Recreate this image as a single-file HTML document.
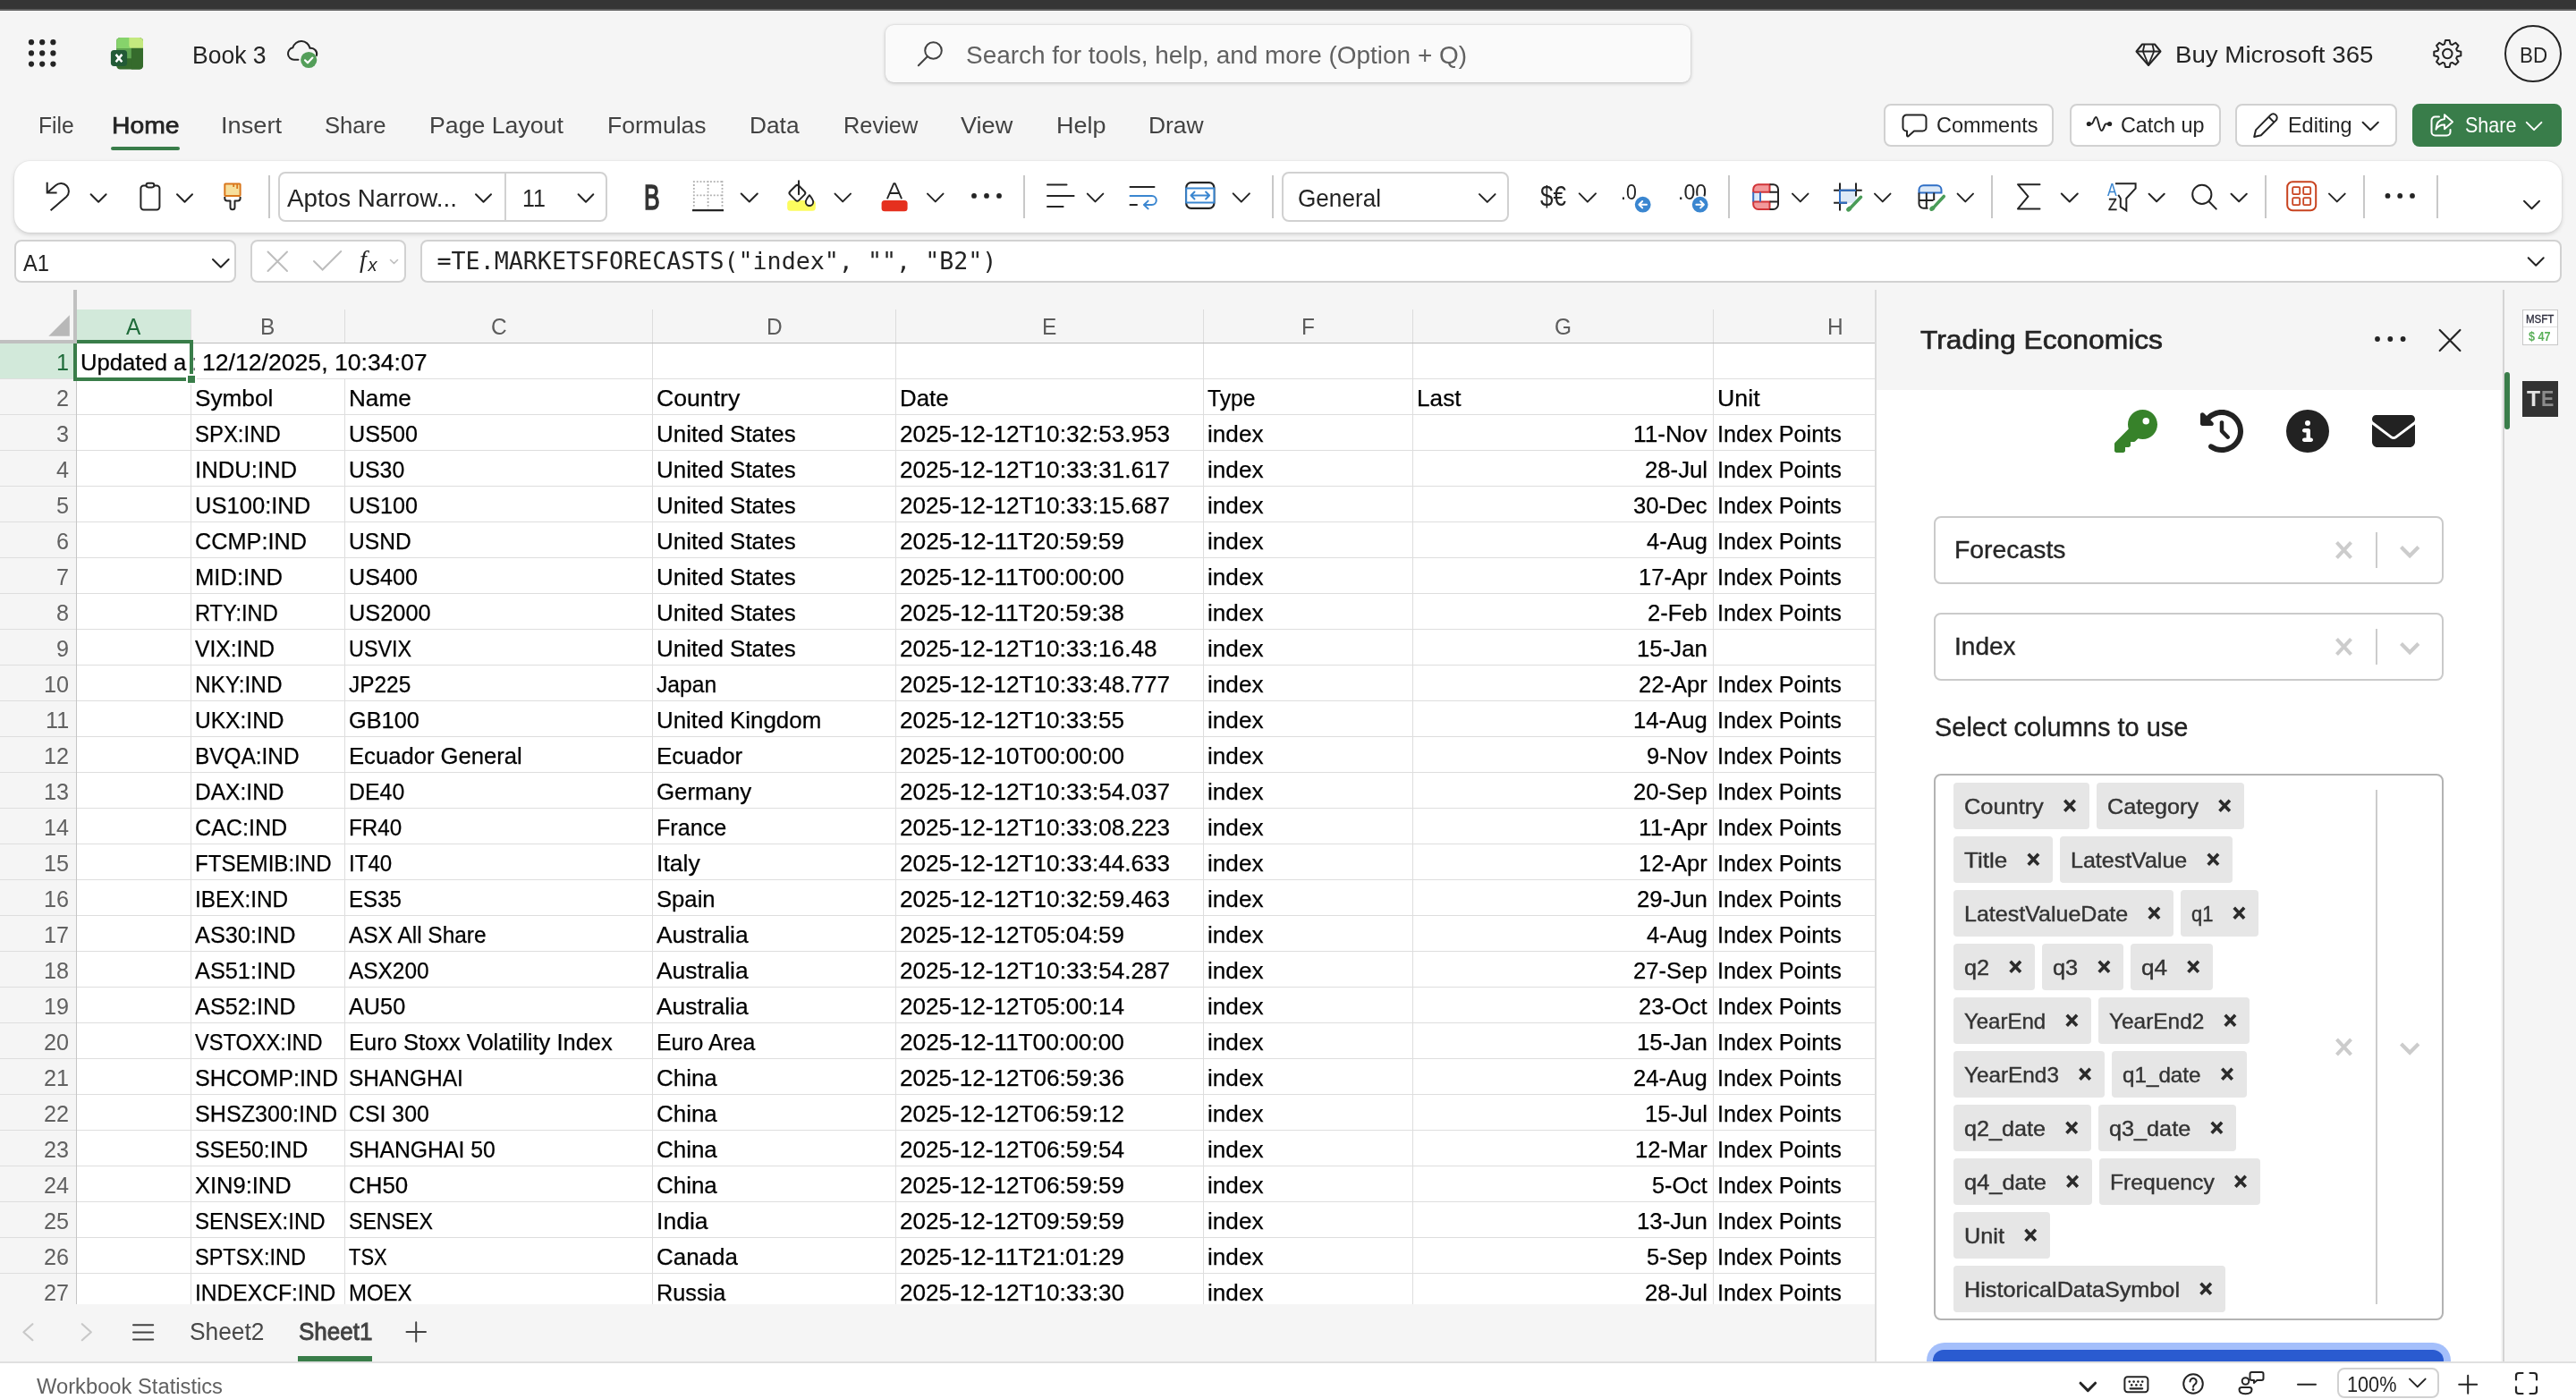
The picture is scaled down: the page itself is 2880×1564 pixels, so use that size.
<!DOCTYPE html>
<html lang="en"><head><meta charset="utf-8"><title>Book 3 - Excel</title>
<style>
html,body{margin:0;padding:0;}
body{width:2880px;height:1564px;overflow:hidden;position:relative;background:#f5f5f5;font-family:"Liberation Sans",sans-serif;color:#242424;}
.t{position:absolute;white-space:pre;}
.a{position:absolute;}
svg{position:absolute;overflow:visible;}
.box{position:absolute;box-sizing:border-box;border:2px solid #d1d1d1;border-radius:8px;background:#fff;}
.sep{position:absolute;width:2px;background:#c8c8c8;}
#root{position:absolute;left:0;top:0;width:2880px;height:1564px;will-change:transform;}

</style></head>
<body>
<div id="root">
<div id="top">
<div class="a" style="left:0;top:0;width:2880px;height:10px;background:#353535"></div><div class="a" style="left:0;top:10px;width:2880px;height:2px;background:#606060"></div><div class="a" style="left:0;top:12px;width:2880px;height:1px;background:#fff"></div>
<svg class="a" style="left:0;top:0" width="1" height="1" fill="#242424"><circle cx="35" cy="47.2" r="3.1"/><circle cx="35" cy="59.4" r="3.1"/><circle cx="35" cy="71.6" r="3.1"/><circle cx="47.2" cy="47.2" r="3.1"/><circle cx="47.2" cy="59.4" r="3.1"/><circle cx="47.2" cy="71.6" r="3.1"/><circle cx="59.4" cy="47.2" r="3.1"/><circle cx="59.4" cy="59.4" r="3.1"/><circle cx="59.4" cy="71.6" r="3.1"/></svg>
<svg class="a" style="left:0;top:0" width="1" height="1"><defs><clipPath id="xc"><rect x="130.200" y="41.900" width="29.800" height="35.700" rx="4.200"/></clipPath></defs><g clip-path="url(#xc)"><rect x="130" y="41" width="31" height="37" fill="#356b2c"/><rect x="130" y="41" width="17" height="13.500" fill="#86d36b"/><rect x="130" y="54.200" width="17" height="11.100" fill="#5fa552"/><rect x="146.800" y="52.700" width="14" height="26" fill="#356b2c"/><path d="M144.300 41h16.700v12.700h-13.700a3 3 0 0 1-3-3z" fill="#c4e97f"/></g><rect x="123.900" y="56" width="18.200" height="17.900" rx="3.600" fill="#225a36"/><path d="M129.600 60.900l6.800 8.400M136.400 60.900l-6.800 8.400" stroke="#fff" stroke-width="2.500" fill="none"/></svg>
<div class="t " style="left:215.00px;top:47.60px;font-size:28.00px;line-height:28.00px;color:#242424;transform:scaleX(0.9475);transform-origin:0 50%;">Book 3</div>
<svg class="a" style="left:0;top:0" width="1" height="1"><path d="M333.500 66.800H328.80A6.8 6.8 0 0 1 327.36 53.35A9.9 9.9 0 0 1 346.57 53.88A6.6 6.6 0 0 1 353.98 62.11" fill="none" stroke="#242424" stroke-width="2" stroke-linecap="round"/><circle cx="345.200" cy="67" r="9.100" fill="#539e59"/><path d="M341 67.300l3 3 5.400-5.700" fill="none" stroke="#fff" stroke-width="2.200" stroke-linecap="round" stroke-linejoin="round"/></svg>
<div class="a" style="left:990px;top:28px;width:900px;height:64px;border-radius:9px;background:#fafafa;box-shadow:0 1px 4px rgba(0,0,0,.22),0 0 2px rgba(0,0,0,.10)"></div>
<svg class="a" style="left:1024.0px;top:44.0px" width="32.0" height="32.0" viewBox="0 0 32 32"><circle cx="19.5" cy="12.5" r="9.3" fill="none" stroke="#424242" stroke-width="2"/><path d="M12.8 19.2L2.8 29.2" stroke="#424242" stroke-width="2" stroke-linecap="round"/></svg>
<div class="t " style="left:1080.40px;top:48.22px;font-size:27.50px;line-height:27.50px;color:#616161;transform:scaleX(1.0163);transform-origin:0 50%;">Search for tools, help, and more (Option + Q)</div>
<svg class="a" style="left:2387.0px;top:47.0px" width="30.0" height="28.0" viewBox="0 0 30 28"><path d="M8 2.5h14l6.5 8L15 26 1.5 10.5z" fill="none" stroke="#242424" stroke-width="2" stroke-linejoin="round"/><path d="M1.5 10.5h27M10.5 2.8L8.8 10.5 15 25.5l6.2-15-1.7-7.7" fill="none" stroke="#242424" stroke-width="1.8" stroke-linejoin="round"/></svg>
<div class="t " style="left:2431.60px;top:48.17px;font-size:26.50px;line-height:26.50px;color:#242424;transform:scaleX(1.0439);transform-origin:0 50%;">Buy Microsoft 365</div>
<svg class="a" style="left:2719.8px;top:44.0px" width="33.0" height="32.0" viewBox="0 0 33 32"><g transform="translate(16.3,16)" fill="none" stroke="#242424" stroke-width="2" stroke-linejoin="round"><polygon points="-3.31,-10.70 -2.27,-15.03 2.27,-15.03 3.31,-10.70 5.23,-9.91 9.02,-12.23 12.23,-9.02 9.91,-5.23 10.70,-3.31 15.03,-2.27 15.03,2.27 10.70,3.31 9.91,5.23 12.23,9.02 9.02,12.23 5.23,9.91 3.31,10.70 2.27,15.03 -2.27,15.03 -3.31,10.70 -5.23,9.91 -9.02,12.23 -12.23,9.02 -9.91,5.23 -10.70,3.31 -15.03,2.27 -15.03,-2.27 -10.70,-3.31 -9.91,-5.23 -12.23,-9.02 -9.02,-12.23 -5.23,-9.91"/><circle r="5.2"/></g></svg>
<div class="a" style="left:2800px;top:28px;width:64px;height:64px;border-radius:50%;box-sizing:border-box;border:2px solid #242424"></div>
<div class="t " style="left:2816.60px;top:49.86px;font-size:24.50px;line-height:24.50px;color:#242424;transform:scaleX(0.9138);transform-origin:0 50%;">BD</div>
<div class="t " style="left:43.30px;top:127.07px;font-size:26.50px;line-height:26.50px;color:#424242;transform:scaleX(0.9299);transform-origin:0 50%;">File</div>
<div class="t " style="left:124.90px;top:127.07px;font-size:26.50px;line-height:26.50px;color:#242424;transform:scaleX(1.0679);transform-origin:0 50%;-webkit-text-stroke:0.75px #242424;">Home</div>
<div class="t " style="left:247.30px;top:127.07px;font-size:26.50px;line-height:26.50px;color:#424242;transform:scaleX(1.0260);transform-origin:0 50%;">Insert</div>
<div class="t " style="left:362.80px;top:127.07px;font-size:26.50px;line-height:26.50px;color:#424242;transform:scaleX(0.9674);transform-origin:0 50%;">Share</div>
<div class="t " style="left:479.60px;top:127.07px;font-size:26.50px;line-height:26.50px;color:#424242;transform:scaleX(1.0066);transform-origin:0 50%;">Page Layout</div>
<div class="t " style="left:678.80px;top:127.07px;font-size:26.50px;line-height:26.50px;color:#424242;transform:scaleX(1.0013);transform-origin:0 50%;">Formulas</div>
<div class="t " style="left:838.20px;top:127.07px;font-size:26.50px;line-height:26.50px;color:#424242;transform:scaleX(0.9912);transform-origin:0 50%;">Data</div>
<div class="t " style="left:943.10px;top:127.07px;font-size:26.50px;line-height:26.50px;color:#424242;transform:scaleX(0.9578);transform-origin:0 50%;">Review</div>
<div class="t " style="left:1074.40px;top:127.07px;font-size:26.50px;line-height:26.50px;color:#424242;transform:scaleX(1.0223);transform-origin:0 50%;">View</div>
<div class="t " style="left:1180.70px;top:127.07px;font-size:26.50px;line-height:26.50px;color:#424242;transform:scaleX(1.0163);transform-origin:0 50%;">Help</div>
<div class="t " style="left:1284.40px;top:127.07px;font-size:26.50px;line-height:26.50px;color:#424242;transform:scaleX(0.9967);transform-origin:0 50%;">Draw</div>
<div class="a" style="left:124px;top:164.3px;width:76.7px;height:3.8px;border-radius:2px;background:#397d4a"></div>
<div class="a" style="left:2106.4px;top:116px;width:190.1px;height:48px;box-sizing:border-box;border:2px solid #d1d1d1;border-radius:8px;background:#fff"></div>
<svg class="a" style="left:2126.0px;top:127.0px" width="29.0" height="27.0" viewBox="0 0 29 27"><path d="M5.5 1.5h18a4 4 0 0 1 4 4v10a4 4 0 0 1-4 4H14l-6.2 5.6c-.7.6-1.8.1-1.8-.8v-4.8h-.5a4 4 0 0 1-4-4v-10a4 4 0 0 1 4-4z" fill="none" stroke="#242424" stroke-width="2" stroke-linejoin="round"/></svg>
<div class="t " style="left:2164.50px;top:128.48px;font-size:24.00px;line-height:24.00px;color:#242424;transform:scaleX(0.9782);transform-origin:0 50%;">Comments</div>
<div class="a" style="left:2313.5px;top:116px;width:169.3px;height:48px;box-sizing:border-box;border:2px solid #d1d1d1;border-radius:8px;background:#fff"></div>
<svg class="a" style="left:2332.0px;top:128.0px" width="30.0" height="22.0" viewBox="0 0 30 22"><path d="M3.5 10.5h3c2 0 2.6-7.5 5-7.5s3.2 15 6 15 2.8-7.5 5-7.5h3" fill="none" stroke="#242424" stroke-width="2" stroke-linecap="round"/><circle cx="3.4" cy="10.5" r="2.6" fill="#242424"/><circle cx="26.6" cy="10.5" r="2.6" fill="#242424"/></svg>
<div class="t " style="left:2371.00px;top:128.48px;font-size:24.00px;line-height:24.00px;color:#242424;transform:scaleX(0.9734);transform-origin:0 50%;">Catch up</div>
<div class="a" style="left:2499.0px;top:116px;width:181.0px;height:48px;box-sizing:border-box;border:2px solid #d1d1d1;border-radius:8px;background:#fff"></div>
<svg class="a" style="left:2518.0px;top:125.0px" width="30.0" height="30.0" viewBox="0 0 30 30"><path d="M20.5 3.6a4.2 4.2 0 0 1 6 6L9.8 26.2 2.2 28l1.8-7.6z" fill="none" stroke="#242424" stroke-width="2" stroke-linejoin="round"/><path d="M18.5 5.8l6 6" stroke="#242424" stroke-width="2"/></svg>
<div class="t " style="left:2558.00px;top:128.48px;font-size:24.00px;line-height:24.00px;color:#242424;transform:scaleX(0.9757);transform-origin:0 50%;">Editing</div>
<svg class="a" style="left:0;top:0" width="1" height="1"><path d="M2641.6 136.7L2650.2 145.3L2658.8 136.7" fill="none" stroke="#242424" stroke-width="2.0" stroke-linecap="round" stroke-linejoin="round"/></svg>
<div class="a" style="left:2697.0px;top:116px;width:167.0px;height:48px;box-sizing:border-box;border:2px solid #397d4a;border-radius:8px;background:#397d4a"></div>
<svg class="a" style="left:2716.0px;top:126.0px" width="28.0" height="28.0" viewBox="0 0 28 28"><path d="M11 4.5H6.5a4 4 0 0 0-4 4v13a4 4 0 0 0 4 4h13a4 4 0 0 0 4-4V19" fill="none" stroke="#fff" stroke-width="2" stroke-linecap="round"/><path d="M17 2.2l9 8-9 8v-4.6c-5-.2-7.5 1.6-9.5 5 .3-6.5 3.5-11 9.5-11.6z" fill="none" stroke="#fff" stroke-width="2" stroke-linejoin="round"/></svg>
<div class="t " style="left:2755.50px;top:128.48px;font-size:24.00px;line-height:24.00px;color:#fff;transform:scaleX(0.8978);transform-origin:0 50%;">Share</div>
<svg class="a" style="left:0;top:0" width="1" height="1"><path d="M2824.8 136.9L2833.1 145.1L2841.4 136.9" fill="none" stroke="#fff" stroke-width="2.0" stroke-linecap="round" stroke-linejoin="round"/></svg>
<div class="a" style="left:16px;top:180px;width:2848px;height:80px;border-radius:18px;background:#fff;box-shadow:0 2px 5px rgba(0,0,0,.16),0 0 2px rgba(0,0,0,.10)"></div>
<svg class="a" style="left:0;top:0" width="1" height="1" fill="none" stroke="#242424" stroke-width="2" stroke-linejoin="miter"><path d="M52.700 203.800V215.500H63.600M52.700 215.500L62.250 207.350A8.700 8.700 0 1 1 74.200 220L56.600 235.300"/></svg>
<svg class="a" style="left:0;top:0" width="1" height="1"><path d="M101.6 217.2L110.1 225.8L118.6 217.2" fill="none" stroke="#242424" stroke-width="2.0" stroke-linecap="round" stroke-linejoin="round"/></svg>
<svg class="a" style="left:0;top:0" width="1" height="1" fill="none" stroke="#242424" stroke-width="2"><rect x="157.400" y="207.400" width="21" height="27" rx="3.200"/><rect x="163.500" y="204.800" width="8.800" height="4.600" rx="2.300" fill="#fff"/></svg>
<svg class="a" style="left:0;top:0" width="1" height="1"><path d="M198.0 217.2L206.5 225.8L215.0 217.2" fill="none" stroke="#242424" stroke-width="2.0" stroke-linecap="round" stroke-linejoin="round"/></svg>
<svg class="a" style="left:0;top:0" width="1" height="1"><rect x="251.300" y="205.500" width="17.300" height="13.500" rx="0.800" fill="#f6df9c" stroke="#d9771c" stroke-width="2"/><path d="M261.200 205.500v3.600M265.200 205.500v5.600" stroke="#d9771c" stroke-width="1.800" fill="none"/><path d="M251.300 220v1.800a2.600 2.600 0 0 0 2.600 2.600h3.600v7.400a2.500 2.500 0 0 0 5 0v-7.400h3.500a2.600 2.600 0 0 0 2.600-2.600V220" fill="none" stroke="#242424" stroke-width="2" stroke-linejoin="round"/></svg>
<div class="sep" style="left:299.8px;top:196px;height:48px"></div>
<div class="box" style="left:310.5px;top:192px;width:368.5px;height:56px"></div>
<div class="a" style="left:563.6px;top:193px;width:2px;height:54px;background:#d1d1d1"></div>
<div class="t " style="left:320.80px;top:207.80px;font-size:28.00px;line-height:28.00px;color:#242424;transform:scaleX(0.9926);transform-origin:0 50%;">Aptos Narrow...</div>
<svg class="a" style="left:0;top:0" width="1" height="1"><path d="M532.0 217.2L540.5 225.8L549.0 217.2" fill="none" stroke="#242424" stroke-width="2.0" stroke-linecap="round" stroke-linejoin="round"/></svg>
<div class="t " style="left:584.00px;top:207.80px;font-size:28.00px;line-height:28.00px;color:#242424;transform:scaleX(0.8945);transform-origin:0 50%;">11</div>
<svg class="a" style="left:0;top:0" width="1" height="1"><path d="M646.6 217.3L655.0 225.7L663.3 217.3" fill="none" stroke="#242424" stroke-width="2.0" stroke-linecap="round" stroke-linejoin="round"/></svg>
<div class="t " style="left:720.20px;top:201.53px;font-size:38.00px;line-height:38.00px;color:#333;transform:scaleX(0.6944);transform-origin:0 50%;-webkit-text-stroke:1.7px #333;">B</div>
<svg class="a" style="left:773.5px;top:201.8px" width="35.0" height="35.0" viewBox="0 0 35 35"><g stroke="#adadad" stroke-width="1.8" stroke-dasharray="1.8 2" fill="none"><path d="M1 1.200h33.500M1.800 0.300v31M33.500 0.300v31M17.600 0.300v31M1 16.400h33.500"/></g><path d="M0 33.2h35" stroke="#242424" stroke-width="2.2"/></svg>
<svg class="a" style="left:0;top:0" width="1" height="1"><path d="M828.7 216.5L837.8 225.5L846.8 216.5" fill="none" stroke="#242424" stroke-width="2.0" stroke-linecap="round" stroke-linejoin="round"/></svg>
<svg class="a" style="left:0;top:0" width="1" height="1"><rect x="880.200" y="223.900" width="31.600" height="11.800" rx="3.500" fill="#fcfc5e"/><rect x="-7" y="-7" width="14" height="14" rx="2.600" transform="translate(891.400 215.800) rotate(45)" fill="#fff" stroke="#242424" stroke-width="2"/><path d="M893 202.300v15" stroke="#242424" stroke-width="2" stroke-linecap="round" fill="none"/><path d="M905 218.200c2.400 3 4.200 5.400 4.200 7.600a4.200 4.200 0 0 1-8.400 0c0-2.200 1.800-4.600 4.200-7.600z" fill="#fff" stroke="#242424" stroke-width="1.900" stroke-linejoin="round"/></svg>
<svg class="a" style="left:0;top:0" width="1" height="1"><path d="M933.5 216.6L942.2 225.4L951.0 216.6" fill="none" stroke="#242424" stroke-width="2.0" stroke-linecap="round" stroke-linejoin="round"/></svg>
<svg class="a" style="left:985.0px;top:203.0px" width="31.0" height="34.0" viewBox="0 0 31 34"><rect x="0.6" y="21" width="29" height="12.2" rx="3.5" fill="#e5301f"/><path d="M7.2 18.6L14.3 2.2h1.4L22.800 18.6M9.600 13h10.800" fill="none" stroke="#242424" stroke-width="1.9" stroke-linejoin="round" stroke-linecap="round"/></svg>
<svg class="a" style="left:0;top:0" width="1" height="1"><path d="M1037.0 216.6L1045.8 225.4L1054.5 216.6" fill="none" stroke="#242424" stroke-width="2.0" stroke-linecap="round" stroke-linejoin="round"/></svg>
<svg class="a" style="left:0;top:0" width="1" height="1" fill="#242424"><circle cx="1089" cy="218.900" r="2.900"/><circle cx="1103" cy="218.900" r="2.900"/><circle cx="1117" cy="218.900" r="2.900"/></svg>
<div class="sep" style="left:1144px;top:196px;height:48px"></div>
<svg class="a" style="left:0;top:0" width="1" height="1" stroke="#242424" stroke-width="2" stroke-linecap="round"><path d="M1171 206.600H1192.500M1171 218.900H1200.600M1171 231H1188.600"/></svg>
<svg class="a" style="left:0;top:0" width="1" height="1"><path d="M1215.8 216.6L1224.5 225.4L1233.3 216.6" fill="none" stroke="#242424" stroke-width="2.0" stroke-linecap="round" stroke-linejoin="round"/></svg>
<svg class="a" style="left:0;top:0" width="1" height="1" fill="none" stroke-width="2" stroke-linecap="round" stroke-linejoin="round"><path d="M1263.500 209.100h27M1263.500 229h7.500" stroke="#242424"/><path d="M1263.500 219h24.300a5 5 0 0 1 0 10h-8.500M1283.600 224.600l-4.600 4.400 4.600 4.400" stroke="#3a86d0"/></svg>
<svg class="a" style="left:1325.0px;top:203.4px" width="34.0" height="31.0" viewBox="0 0 34 31"><rect x="1.200" y="1.200" width="31.200" height="28.600" rx="5.500" fill="none" stroke="#242424" stroke-width="2.200"/><rect x="1.200" y="7.500" width="31.200" height="16" fill="#fff" stroke="#3a86d0" stroke-width="2"/><path d="M6.500 15.500h20.600M10.500 11.500l-4 4 4 4M23.100 11.500l4 4-4 4" fill="none" stroke="#3a86d0" stroke-width="2" stroke-linecap="round" stroke-linejoin="round"/></svg>
<svg class="a" style="left:0;top:0" width="1" height="1"><path d="M1378.7 216.4L1387.8 225.6L1396.9 216.4" fill="none" stroke="#242424" stroke-width="2.0" stroke-linecap="round" stroke-linejoin="round"/></svg>
<div class="sep" style="left:1422px;top:196px;height:48px"></div>
<div class="box" style="left:1432.8px;top:192px;width:254.6px;height:56px"></div>
<div class="t " style="left:1451.00px;top:208.10px;font-size:28.00px;line-height:28.00px;color:#242424;transform:scaleX(0.9336);transform-origin:0 50%;">General</div>
<svg class="a" style="left:0;top:0" width="1" height="1"><path d="M1654.0 217.1L1662.8 225.9L1671.6 217.1" fill="none" stroke="#242424" stroke-width="2.0" stroke-linecap="round" stroke-linejoin="round"/></svg>
<div class="t " style="left:1722.00px;top:203.98px;font-size:30.50px;line-height:30.50px;color:#242424;transform:scaleX(0.8551);transform-origin:0 50%;">$€</div>
<svg class="a" style="left:0;top:0" width="1" height="1"><path d="M1765.8 216.4L1774.9 225.6L1784.0 216.4" fill="none" stroke="#242424" stroke-width="2.0" stroke-linecap="round" stroke-linejoin="round"/></svg>
<div class="t " style="left:1812.00px;top:203.54px;font-size:23.70px;line-height:23.70px;color:#242424;transform:scaleX(0.9005);transform-origin:0 50%;">.0</div>
<svg class="a" style="left:1826.4px;top:218.4px" width="21.4" height="21.4" viewBox="0 0 21.4 21.4"><circle cx="10.700" cy="10.700" r="10.500" fill="#fff"/><circle cx="10.700" cy="10.700" r="8.900" fill="#3a86d0"/><path d="M15 10.700H6.800M10.200 7L6.500 10.700l3.700 3.700" fill="none" stroke="#fff" stroke-width="2" stroke-linecap="round" stroke-linejoin="round"/></svg>
<div class="t " style="left:1876.00px;top:203.54px;font-size:23.70px;line-height:23.70px;color:#242424;transform:scaleX(0.9714);transform-origin:0 50%;">.00</div>
<svg class="a" style="left:1890.3px;top:218.4px" width="21.4" height="21.4" viewBox="0 0 21.4 21.4"><circle cx="10.700" cy="10.700" r="10.500" fill="#fff"/><circle cx="10.700" cy="10.700" r="8.900" fill="#3a86d0"/><path d="M6.400 10.700h8.200M11.200 7l3.700 3.700-3.700 3.700" fill="none" stroke="#fff" stroke-width="2" stroke-linecap="round" stroke-linejoin="round"/></svg>
<div class="sep" style="left:1931.800px;top:196px;height:48px"></div>
<svg class="a" style="left:1958.5px;top:204.5px" width="31.0" height="31.0" viewBox="0 0 31 31"><defs><clipPath id="cf"><rect x="1.200" y="1.200" width="27.800" height="27.800" rx="5.500"/></clipPath></defs><g clip-path="url(#cf)"><rect x="0" y="0" width="30" height="30" fill="#fff"/><rect x="0" y="0" width="19.500" height="9.800" fill="#f2999b"/><rect x="0" y="20.400" width="19.500" height="9.800" fill="#f2999b"/><rect x="0" y="9.800" width="8.500" height="10.600" fill="#dbe9f8"/></g><path d="M19.500 1.200H6.700a5.500 5.500 0 0 0-5.500 5.500v3.100h18.300zM19.500 29H6.700a5.500 5.500 0 0 1-5.500-5.500v-3.100h18.300z" fill="none" stroke="#d13438" stroke-width="2"/><path d="M1.200 9.800v10.600M9 9.800v10.600" stroke="#3a6fc4" stroke-width="2"/><path d="M19.500 1.200h4a5.500 5.500 0 0 1 5.500 5.500v16.800a5.500 5.500 0 0 1-5.500 5.500h-4M19.500 9.800h9.500M19.500 20.400h9.500" fill="none" stroke="#242424" stroke-width="2"/></svg>
<svg class="a" style="left:0;top:0" width="1" height="1"><path d="M2004.0 216.6L2012.8 225.4L2021.5 216.6" fill="none" stroke="#242424" stroke-width="2.0" stroke-linecap="round" stroke-linejoin="round"/></svg>
<svg class="a" style="left:0;top:0" width="1" height="1" fill="none" stroke-width="2"><rect x="2057" y="212.700" width="18" height="14.100" fill="#dce9f7" stroke="none"/><path d="M2057 204.600v30.800M2075 204.600v15M2050.100 212.700h31.600M2050.100 226.800h15" stroke="#242424"/><path d="M2075 212.700h-18v14.100h8" stroke="#2f6fc6"/><path d="M2080.500 220.300L2070 231.300" stroke="#4a9c58" stroke-width="3.600" stroke-linecap="round"/><ellipse cx="2067.300" cy="233.600" rx="3.400" ry="2.500" transform="rotate(-40 2067.300 233.600)" fill="#4a9c58" stroke="none"/></svg>
<svg class="a" style="left:0;top:0" width="1" height="1"><path d="M2096.0 216.6L2104.8 225.4L2113.5 216.6" fill="none" stroke="#242424" stroke-width="2.0" stroke-linecap="round" stroke-linejoin="round"/></svg>
<svg class="a" style="left:0;top:0" width="1" height="1" fill="none" stroke-width="2"><path d="M2145.500 215.400v-3.100a5 5 0 0 1 5-5h15a5 5 0 0 1 5 5v3.100z" fill="#dce9f7" stroke="#2f6fc6"/><path d="M2145.500 215.400v12.300a5 5 0 0 0 5 5h5M2145.500 224h16M2153.800 215.400v17.300M2162.200 215.400v8.600" stroke="#242424"/><path d="M2173.300 219.500L2163 230.600" stroke="#4a9c58" stroke-width="3.600" stroke-linecap="round"/><ellipse cx="2160.400" cy="233" rx="3.400" ry="2.500" transform="rotate(-40 2160.400 233)" fill="#4a9c58" stroke="none"/></svg>
<svg class="a" style="left:0;top:0" width="1" height="1"><path d="M2188.6 216.6L2197.3 225.4L2206.0 216.6" fill="none" stroke="#242424" stroke-width="2.0" stroke-linecap="round" stroke-linejoin="round"/></svg>
<div class="sep" style="left:2226px;top:196px;height:48px"></div>
<svg class="a" style="left:2253.5px;top:205.0px" width="29.0" height="30.0" viewBox="0 0 29 30"><path d="M26.500 1.200H2l11.500 13.500L2 28.400h24.500" fill="none" stroke="#242424" stroke-width="2" stroke-linejoin="round" stroke-linecap="round"/></svg>
<svg class="a" style="left:0;top:0" width="1" height="1"><path d="M2304.8 216.5L2313.8 225.5L2322.8 216.5" fill="none" stroke="#242424" stroke-width="2.0" stroke-linecap="round" stroke-linejoin="round"/></svg>
<svg class="a" style="left:0;top:0" width="1" height="1" fill="none" stroke="#242424" stroke-width="2" stroke-linejoin="miter"><path d="M2365 205.200h22.600v5.500L2377.300 221.700v13.700l-6.500-4.300v-9.400l-2.600-3.800"/></svg>
<div class="t " style="left:2355.80px;top:201.93px;font-size:20.40px;line-height:20.40px;color:#3a86d0;transform:scaleX(0.7864);transform-origin:0 50%;">A</div>
<div class="t " style="left:2356.70px;top:220.59px;font-size:17.50px;line-height:17.50px;color:#242424;transform:scaleX(0.9259);transform-origin:0 50%;-webkit-text-stroke:0.4px #242424;">Z</div>
<svg class="a" style="left:0;top:0" width="1" height="1"><path d="M2402.6 216.7L2411.1 225.3L2419.7 216.7" fill="none" stroke="#242424" stroke-width="2.0" stroke-linecap="round" stroke-linejoin="round"/></svg>
<svg class="a" style="left:2448.5px;top:205.0px" width="31.0" height="31.0" viewBox="0 0 31 31"><circle cx="12.800" cy="12.400" r="10.600" fill="none" stroke="#242424" stroke-width="2"/><path d="M20.400 20l8.400 8.600" stroke="#242424" stroke-width="2" stroke-linecap="round"/></svg>
<svg class="a" style="left:0;top:0" width="1" height="1"><path d="M2494.5 216.7L2503.2 225.3L2511.8 216.7" fill="none" stroke="#242424" stroke-width="2.0" stroke-linecap="round" stroke-linejoin="round"/></svg>
<div class="sep" style="left:2532px;top:196px;height:48px"></div>
<svg class="a" style="left:2555.5px;top:201.5px" width="35.0" height="35.0" viewBox="0 0 35 35"><rect x="1.200" y="1.200" width="32" height="32" rx="6" fill="none" stroke="#c8431f" stroke-width="2"/><g fill="none" stroke="#c8431f" stroke-width="1.800"><rect x="7.200" y="7.200" width="8" height="8" rx="1.200"/><rect x="19.200" y="7.200" width="8" height="8" rx="1.200"/><rect x="7.200" y="19.200" width="8" height="8" rx="1.200"/><rect x="19.200" y="19.200" width="8" height="8" rx="1.200"/></g></svg>
<svg class="a" style="left:0;top:0" width="1" height="1"><path d="M2604.0 216.6L2612.8 225.4L2621.7 216.6" fill="none" stroke="#242424" stroke-width="2.0" stroke-linecap="round" stroke-linejoin="round"/></svg>
<div class="sep" style="left:2642px;top:196px;height:48px"></div>
<svg class="a" style="left:0;top:0" width="1" height="1" fill="#242424"><circle cx="2669.500" cy="218.900" r="2.900"/><circle cx="2683.200" cy="218.900" r="2.900"/><circle cx="2697" cy="218.900" r="2.900"/></svg>
<div class="sep" style="left:2724px;top:196px;height:48px"></div>
<svg class="a" style="left:0;top:0" width="1" height="1"><path d="M2822.0 224.8L2830.5 233.2L2839.0 224.8" fill="none" stroke="#242424" stroke-width="2.0" stroke-linecap="round" stroke-linejoin="round"/></svg>
<div class="box" style="left:16px;top:268px;width:248px;height:48px"></div>
<div class="t " style="left:26.20px;top:281.71px;font-size:25.50px;line-height:25.50px;color:#242424;transform:scaleX(0.9299);transform-origin:0 50%;">A1</div>
<svg class="a" style="left:0;top:0" width="1" height="1"><path d="M238.0 290.0L246.8 298.8L255.6 290.0" fill="none" stroke="#242424" stroke-width="2.0" stroke-linecap="round" stroke-linejoin="round"/></svg>
<div class="box" style="left:280px;top:268px;width:174px;height:48px"></div>
<svg class="a" style="left:0;top:0" width="1" height="1" fill="none" stroke="#bdbdbd" stroke-width="2" stroke-linecap="round"><path d="M299.500 281.500l21.500 21.500M321 281.500l-21.500 21.500M351 292l9.600 9.500 20.600-20.500"/></svg>
<div class="t" style="left:402px;top:276px;font-size:28px;line-height:28px;font-family:'Liberation Serif',serif;font-style:italic;color:#242424">f</div>
<div class="t" style="left:411.5px;top:286px;font-size:20px;line-height:20px;font-style:italic;color:#242424">x</div>
<svg class="a" style="left:0;top:0" width="1" height="1"><path d="M436.5 290.5L440.5 294.5L444.5 290.5" fill="none" stroke="#bdbdbd" stroke-width="1.6" stroke-linecap="round" stroke-linejoin="round"/></svg>
<div class="box" style="left:470px;top:268px;width:2394px;height:48px"></div>
<div class="t" style="left:488.5px;top:276.70px;font-size:26.67px;line-height:30px;font-family:'DejaVu Sans Mono','Liberation Mono',monospace;letter-spacing:0px;color:#242424">=TE.MARKETSFORECASTS(&quot;index&quot;, &quot;&quot;, &quot;B2&quot;)</div>
<svg class="a" style="left:0;top:0" width="1" height="1"><path d="M2826.7 288.2L2835.2 296.8L2843.7 288.2" fill="none" stroke="#242424" stroke-width="2.0" stroke-linecap="round" stroke-linejoin="round"/></svg>
</div>
<div id="grid" class="a" style="left:0;top:324px;width:2096px;height:1134px;overflow:hidden">
<div class="a" style="left:86px;top:60px;width:2010px;height:1074px;background:#fff"></div>
<div class="a" style="left:86px;top:22px;width:128px;height:34px;background:#d2e9da"></div>
<div class="a" style="left:0;top:60px;width:82px;height:39px;background:#d2e9da"></div>
<div class="t " style="left:141.35px;top:27.79px;font-size:26.00px;line-height:26.00px;color:#1f6b3a;transform:scaleX(0.9400);transform-origin:0 50%;">A</div>
<div class="t " style="left:291.35px;top:27.79px;font-size:26.00px;line-height:26.00px;color:#5c5c5c;transform:scaleX(0.9400);transform-origin:0 50%;">B</div>
<div class="t " style="left:548.68px;top:27.79px;font-size:26.00px;line-height:26.00px;color:#5c5c5c;transform:scaleX(0.9400);transform-origin:0 50%;">C</div>
<div class="t " style="left:856.68px;top:27.79px;font-size:26.00px;line-height:26.00px;color:#5c5c5c;transform:scaleX(0.9400);transform-origin:0 50%;">D</div>
<div class="t " style="left:1165.35px;top:27.79px;font-size:26.00px;line-height:26.00px;color:#5c5c5c;transform:scaleX(0.9400);transform-origin:0 50%;">E</div>
<div class="t " style="left:1455.04px;top:27.79px;font-size:26.00px;line-height:26.00px;color:#5c5c5c;transform:scaleX(0.9400);transform-origin:0 50%;">F</div>
<div class="t " style="left:1737.99px;top:27.79px;font-size:26.00px;line-height:26.00px;color:#5c5c5c;transform:scaleX(0.9400);transform-origin:0 50%;">G</div>
<div class="t " style="left:2043.18px;top:27.79px;font-size:26.00px;line-height:26.00px;color:#5c5c5c;transform:scaleX(0.9400);transform-origin:0 50%;">H</div>
<div class="a" style="left:213px;top:22px;width:1px;height:37px;background:#dcdcdc"></div>
<div class="a" style="left:385px;top:22px;width:1px;height:37px;background:#dcdcdc"></div>
<div class="a" style="left:729px;top:22px;width:1px;height:37px;background:#dcdcdc"></div>
<div class="a" style="left:1001px;top:22px;width:1px;height:37px;background:#dcdcdc"></div>
<div class="a" style="left:1345px;top:22px;width:1px;height:37px;background:#dcdcdc"></div>
<div class="a" style="left:1579px;top:22px;width:1px;height:37px;background:#dcdcdc"></div>
<div class="a" style="left:1915px;top:22px;width:1px;height:37px;background:#dcdcdc"></div>
<div class="a" style="left:86px;top:59px;width:2010px;height:1px;background:#bdbdbd"></div>
<div class="a" style="left:0;top:99px;width:2096px;height:1px;background:#dedede"></div>
<div class="a" style="left:0;top:139px;width:2096px;height:1px;background:#dedede"></div>
<div class="a" style="left:0;top:179px;width:2096px;height:1px;background:#dedede"></div>
<div class="a" style="left:0;top:219px;width:2096px;height:1px;background:#dedede"></div>
<div class="a" style="left:0;top:259px;width:2096px;height:1px;background:#dedede"></div>
<div class="a" style="left:0;top:299px;width:2096px;height:1px;background:#dedede"></div>
<div class="a" style="left:0;top:339px;width:2096px;height:1px;background:#dedede"></div>
<div class="a" style="left:0;top:379px;width:2096px;height:1px;background:#dedede"></div>
<div class="a" style="left:0;top:419px;width:2096px;height:1px;background:#dedede"></div>
<div class="a" style="left:0;top:459px;width:2096px;height:1px;background:#dedede"></div>
<div class="a" style="left:0;top:499px;width:2096px;height:1px;background:#dedede"></div>
<div class="a" style="left:0;top:539px;width:2096px;height:1px;background:#dedede"></div>
<div class="a" style="left:0;top:579px;width:2096px;height:1px;background:#dedede"></div>
<div class="a" style="left:0;top:619px;width:2096px;height:1px;background:#dedede"></div>
<div class="a" style="left:0;top:659px;width:2096px;height:1px;background:#dedede"></div>
<div class="a" style="left:0;top:699px;width:2096px;height:1px;background:#dedede"></div>
<div class="a" style="left:0;top:739px;width:2096px;height:1px;background:#dedede"></div>
<div class="a" style="left:0;top:779px;width:2096px;height:1px;background:#dedede"></div>
<div class="a" style="left:0;top:819px;width:2096px;height:1px;background:#dedede"></div>
<div class="a" style="left:0;top:859px;width:2096px;height:1px;background:#dedede"></div>
<div class="a" style="left:0;top:899px;width:2096px;height:1px;background:#dedede"></div>
<div class="a" style="left:0;top:939px;width:2096px;height:1px;background:#dedede"></div>
<div class="a" style="left:0;top:979px;width:2096px;height:1px;background:#dedede"></div>
<div class="a" style="left:0;top:1019px;width:2096px;height:1px;background:#dedede"></div>
<div class="a" style="left:0;top:1059px;width:2096px;height:1px;background:#dedede"></div>
<div class="a" style="left:0;top:1099px;width:2096px;height:1px;background:#dedede"></div>
<div class="a" style="left:0;top:1139px;width:2096px;height:1px;background:#dedede"></div>
<div class="a" style="left:729px;top:60px;width:1px;height:39px;background:#dedede"></div>
<div class="a" style="left:1001px;top:60px;width:1px;height:39px;background:#dedede"></div>
<div class="a" style="left:1345px;top:60px;width:1px;height:39px;background:#dedede"></div>
<div class="a" style="left:1579px;top:60px;width:1px;height:39px;background:#dedede"></div>
<div class="a" style="left:1915px;top:60px;width:1px;height:39px;background:#dedede"></div>
<div class="a" style="left:213px;top:100px;width:1px;height:39px;background:#dedede"></div>
<div class="a" style="left:385px;top:100px;width:1px;height:39px;background:#dedede"></div>
<div class="a" style="left:729px;top:100px;width:1px;height:39px;background:#dedede"></div>
<div class="a" style="left:1001px;top:100px;width:1px;height:39px;background:#dedede"></div>
<div class="a" style="left:1345px;top:100px;width:1px;height:39px;background:#dedede"></div>
<div class="a" style="left:1579px;top:100px;width:1px;height:39px;background:#dedede"></div>
<div class="a" style="left:1915px;top:100px;width:1px;height:39px;background:#dedede"></div>
<div class="a" style="left:213px;top:140px;width:1px;height:39px;background:#dedede"></div>
<div class="a" style="left:385px;top:140px;width:1px;height:39px;background:#dedede"></div>
<div class="a" style="left:729px;top:140px;width:1px;height:39px;background:#dedede"></div>
<div class="a" style="left:1001px;top:140px;width:1px;height:39px;background:#dedede"></div>
<div class="a" style="left:1345px;top:140px;width:1px;height:39px;background:#dedede"></div>
<div class="a" style="left:1579px;top:140px;width:1px;height:39px;background:#dedede"></div>
<div class="a" style="left:1915px;top:140px;width:1px;height:39px;background:#dedede"></div>
<div class="a" style="left:213px;top:180px;width:1px;height:39px;background:#dedede"></div>
<div class="a" style="left:385px;top:180px;width:1px;height:39px;background:#dedede"></div>
<div class="a" style="left:729px;top:180px;width:1px;height:39px;background:#dedede"></div>
<div class="a" style="left:1001px;top:180px;width:1px;height:39px;background:#dedede"></div>
<div class="a" style="left:1345px;top:180px;width:1px;height:39px;background:#dedede"></div>
<div class="a" style="left:1579px;top:180px;width:1px;height:39px;background:#dedede"></div>
<div class="a" style="left:1915px;top:180px;width:1px;height:39px;background:#dedede"></div>
<div class="a" style="left:213px;top:220px;width:1px;height:39px;background:#dedede"></div>
<div class="a" style="left:385px;top:220px;width:1px;height:39px;background:#dedede"></div>
<div class="a" style="left:729px;top:220px;width:1px;height:39px;background:#dedede"></div>
<div class="a" style="left:1001px;top:220px;width:1px;height:39px;background:#dedede"></div>
<div class="a" style="left:1345px;top:220px;width:1px;height:39px;background:#dedede"></div>
<div class="a" style="left:1579px;top:220px;width:1px;height:39px;background:#dedede"></div>
<div class="a" style="left:1915px;top:220px;width:1px;height:39px;background:#dedede"></div>
<div class="a" style="left:213px;top:260px;width:1px;height:39px;background:#dedede"></div>
<div class="a" style="left:385px;top:260px;width:1px;height:39px;background:#dedede"></div>
<div class="a" style="left:729px;top:260px;width:1px;height:39px;background:#dedede"></div>
<div class="a" style="left:1001px;top:260px;width:1px;height:39px;background:#dedede"></div>
<div class="a" style="left:1345px;top:260px;width:1px;height:39px;background:#dedede"></div>
<div class="a" style="left:1579px;top:260px;width:1px;height:39px;background:#dedede"></div>
<div class="a" style="left:1915px;top:260px;width:1px;height:39px;background:#dedede"></div>
<div class="a" style="left:213px;top:300px;width:1px;height:39px;background:#dedede"></div>
<div class="a" style="left:385px;top:300px;width:1px;height:39px;background:#dedede"></div>
<div class="a" style="left:729px;top:300px;width:1px;height:39px;background:#dedede"></div>
<div class="a" style="left:1001px;top:300px;width:1px;height:39px;background:#dedede"></div>
<div class="a" style="left:1345px;top:300px;width:1px;height:39px;background:#dedede"></div>
<div class="a" style="left:1579px;top:300px;width:1px;height:39px;background:#dedede"></div>
<div class="a" style="left:1915px;top:300px;width:1px;height:39px;background:#dedede"></div>
<div class="a" style="left:213px;top:340px;width:1px;height:39px;background:#dedede"></div>
<div class="a" style="left:385px;top:340px;width:1px;height:39px;background:#dedede"></div>
<div class="a" style="left:729px;top:340px;width:1px;height:39px;background:#dedede"></div>
<div class="a" style="left:1001px;top:340px;width:1px;height:39px;background:#dedede"></div>
<div class="a" style="left:1345px;top:340px;width:1px;height:39px;background:#dedede"></div>
<div class="a" style="left:1579px;top:340px;width:1px;height:39px;background:#dedede"></div>
<div class="a" style="left:1915px;top:340px;width:1px;height:39px;background:#dedede"></div>
<div class="a" style="left:213px;top:380px;width:1px;height:39px;background:#dedede"></div>
<div class="a" style="left:385px;top:380px;width:1px;height:39px;background:#dedede"></div>
<div class="a" style="left:729px;top:380px;width:1px;height:39px;background:#dedede"></div>
<div class="a" style="left:1001px;top:380px;width:1px;height:39px;background:#dedede"></div>
<div class="a" style="left:1345px;top:380px;width:1px;height:39px;background:#dedede"></div>
<div class="a" style="left:1579px;top:380px;width:1px;height:39px;background:#dedede"></div>
<div class="a" style="left:1915px;top:380px;width:1px;height:39px;background:#dedede"></div>
<div class="a" style="left:213px;top:420px;width:1px;height:39px;background:#dedede"></div>
<div class="a" style="left:385px;top:420px;width:1px;height:39px;background:#dedede"></div>
<div class="a" style="left:729px;top:420px;width:1px;height:39px;background:#dedede"></div>
<div class="a" style="left:1001px;top:420px;width:1px;height:39px;background:#dedede"></div>
<div class="a" style="left:1345px;top:420px;width:1px;height:39px;background:#dedede"></div>
<div class="a" style="left:1579px;top:420px;width:1px;height:39px;background:#dedede"></div>
<div class="a" style="left:1915px;top:420px;width:1px;height:39px;background:#dedede"></div>
<div class="a" style="left:213px;top:460px;width:1px;height:39px;background:#dedede"></div>
<div class="a" style="left:385px;top:460px;width:1px;height:39px;background:#dedede"></div>
<div class="a" style="left:729px;top:460px;width:1px;height:39px;background:#dedede"></div>
<div class="a" style="left:1001px;top:460px;width:1px;height:39px;background:#dedede"></div>
<div class="a" style="left:1345px;top:460px;width:1px;height:39px;background:#dedede"></div>
<div class="a" style="left:1579px;top:460px;width:1px;height:39px;background:#dedede"></div>
<div class="a" style="left:1915px;top:460px;width:1px;height:39px;background:#dedede"></div>
<div class="a" style="left:213px;top:500px;width:1px;height:39px;background:#dedede"></div>
<div class="a" style="left:385px;top:500px;width:1px;height:39px;background:#dedede"></div>
<div class="a" style="left:729px;top:500px;width:1px;height:39px;background:#dedede"></div>
<div class="a" style="left:1001px;top:500px;width:1px;height:39px;background:#dedede"></div>
<div class="a" style="left:1345px;top:500px;width:1px;height:39px;background:#dedede"></div>
<div class="a" style="left:1579px;top:500px;width:1px;height:39px;background:#dedede"></div>
<div class="a" style="left:1915px;top:500px;width:1px;height:39px;background:#dedede"></div>
<div class="a" style="left:213px;top:540px;width:1px;height:39px;background:#dedede"></div>
<div class="a" style="left:385px;top:540px;width:1px;height:39px;background:#dedede"></div>
<div class="a" style="left:729px;top:540px;width:1px;height:39px;background:#dedede"></div>
<div class="a" style="left:1001px;top:540px;width:1px;height:39px;background:#dedede"></div>
<div class="a" style="left:1345px;top:540px;width:1px;height:39px;background:#dedede"></div>
<div class="a" style="left:1579px;top:540px;width:1px;height:39px;background:#dedede"></div>
<div class="a" style="left:1915px;top:540px;width:1px;height:39px;background:#dedede"></div>
<div class="a" style="left:213px;top:580px;width:1px;height:39px;background:#dedede"></div>
<div class="a" style="left:385px;top:580px;width:1px;height:39px;background:#dedede"></div>
<div class="a" style="left:729px;top:580px;width:1px;height:39px;background:#dedede"></div>
<div class="a" style="left:1001px;top:580px;width:1px;height:39px;background:#dedede"></div>
<div class="a" style="left:1345px;top:580px;width:1px;height:39px;background:#dedede"></div>
<div class="a" style="left:1579px;top:580px;width:1px;height:39px;background:#dedede"></div>
<div class="a" style="left:1915px;top:580px;width:1px;height:39px;background:#dedede"></div>
<div class="a" style="left:213px;top:620px;width:1px;height:39px;background:#dedede"></div>
<div class="a" style="left:385px;top:620px;width:1px;height:39px;background:#dedede"></div>
<div class="a" style="left:729px;top:620px;width:1px;height:39px;background:#dedede"></div>
<div class="a" style="left:1001px;top:620px;width:1px;height:39px;background:#dedede"></div>
<div class="a" style="left:1345px;top:620px;width:1px;height:39px;background:#dedede"></div>
<div class="a" style="left:1579px;top:620px;width:1px;height:39px;background:#dedede"></div>
<div class="a" style="left:1915px;top:620px;width:1px;height:39px;background:#dedede"></div>
<div class="a" style="left:213px;top:660px;width:1px;height:39px;background:#dedede"></div>
<div class="a" style="left:385px;top:660px;width:1px;height:39px;background:#dedede"></div>
<div class="a" style="left:729px;top:660px;width:1px;height:39px;background:#dedede"></div>
<div class="a" style="left:1001px;top:660px;width:1px;height:39px;background:#dedede"></div>
<div class="a" style="left:1345px;top:660px;width:1px;height:39px;background:#dedede"></div>
<div class="a" style="left:1579px;top:660px;width:1px;height:39px;background:#dedede"></div>
<div class="a" style="left:1915px;top:660px;width:1px;height:39px;background:#dedede"></div>
<div class="a" style="left:213px;top:700px;width:1px;height:39px;background:#dedede"></div>
<div class="a" style="left:385px;top:700px;width:1px;height:39px;background:#dedede"></div>
<div class="a" style="left:729px;top:700px;width:1px;height:39px;background:#dedede"></div>
<div class="a" style="left:1001px;top:700px;width:1px;height:39px;background:#dedede"></div>
<div class="a" style="left:1345px;top:700px;width:1px;height:39px;background:#dedede"></div>
<div class="a" style="left:1579px;top:700px;width:1px;height:39px;background:#dedede"></div>
<div class="a" style="left:1915px;top:700px;width:1px;height:39px;background:#dedede"></div>
<div class="a" style="left:213px;top:740px;width:1px;height:39px;background:#dedede"></div>
<div class="a" style="left:385px;top:740px;width:1px;height:39px;background:#dedede"></div>
<div class="a" style="left:729px;top:740px;width:1px;height:39px;background:#dedede"></div>
<div class="a" style="left:1001px;top:740px;width:1px;height:39px;background:#dedede"></div>
<div class="a" style="left:1345px;top:740px;width:1px;height:39px;background:#dedede"></div>
<div class="a" style="left:1579px;top:740px;width:1px;height:39px;background:#dedede"></div>
<div class="a" style="left:1915px;top:740px;width:1px;height:39px;background:#dedede"></div>
<div class="a" style="left:213px;top:780px;width:1px;height:39px;background:#dedede"></div>
<div class="a" style="left:385px;top:780px;width:1px;height:39px;background:#dedede"></div>
<div class="a" style="left:729px;top:780px;width:1px;height:39px;background:#dedede"></div>
<div class="a" style="left:1001px;top:780px;width:1px;height:39px;background:#dedede"></div>
<div class="a" style="left:1345px;top:780px;width:1px;height:39px;background:#dedede"></div>
<div class="a" style="left:1579px;top:780px;width:1px;height:39px;background:#dedede"></div>
<div class="a" style="left:1915px;top:780px;width:1px;height:39px;background:#dedede"></div>
<div class="a" style="left:213px;top:820px;width:1px;height:39px;background:#dedede"></div>
<div class="a" style="left:385px;top:820px;width:1px;height:39px;background:#dedede"></div>
<div class="a" style="left:729px;top:820px;width:1px;height:39px;background:#dedede"></div>
<div class="a" style="left:1001px;top:820px;width:1px;height:39px;background:#dedede"></div>
<div class="a" style="left:1345px;top:820px;width:1px;height:39px;background:#dedede"></div>
<div class="a" style="left:1579px;top:820px;width:1px;height:39px;background:#dedede"></div>
<div class="a" style="left:1915px;top:820px;width:1px;height:39px;background:#dedede"></div>
<div class="a" style="left:213px;top:860px;width:1px;height:39px;background:#dedede"></div>
<div class="a" style="left:385px;top:860px;width:1px;height:39px;background:#dedede"></div>
<div class="a" style="left:729px;top:860px;width:1px;height:39px;background:#dedede"></div>
<div class="a" style="left:1001px;top:860px;width:1px;height:39px;background:#dedede"></div>
<div class="a" style="left:1345px;top:860px;width:1px;height:39px;background:#dedede"></div>
<div class="a" style="left:1579px;top:860px;width:1px;height:39px;background:#dedede"></div>
<div class="a" style="left:1915px;top:860px;width:1px;height:39px;background:#dedede"></div>
<div class="a" style="left:213px;top:900px;width:1px;height:39px;background:#dedede"></div>
<div class="a" style="left:385px;top:900px;width:1px;height:39px;background:#dedede"></div>
<div class="a" style="left:729px;top:900px;width:1px;height:39px;background:#dedede"></div>
<div class="a" style="left:1001px;top:900px;width:1px;height:39px;background:#dedede"></div>
<div class="a" style="left:1345px;top:900px;width:1px;height:39px;background:#dedede"></div>
<div class="a" style="left:1579px;top:900px;width:1px;height:39px;background:#dedede"></div>
<div class="a" style="left:1915px;top:900px;width:1px;height:39px;background:#dedede"></div>
<div class="a" style="left:213px;top:940px;width:1px;height:39px;background:#dedede"></div>
<div class="a" style="left:385px;top:940px;width:1px;height:39px;background:#dedede"></div>
<div class="a" style="left:729px;top:940px;width:1px;height:39px;background:#dedede"></div>
<div class="a" style="left:1001px;top:940px;width:1px;height:39px;background:#dedede"></div>
<div class="a" style="left:1345px;top:940px;width:1px;height:39px;background:#dedede"></div>
<div class="a" style="left:1579px;top:940px;width:1px;height:39px;background:#dedede"></div>
<div class="a" style="left:1915px;top:940px;width:1px;height:39px;background:#dedede"></div>
<div class="a" style="left:213px;top:980px;width:1px;height:39px;background:#dedede"></div>
<div class="a" style="left:385px;top:980px;width:1px;height:39px;background:#dedede"></div>
<div class="a" style="left:729px;top:980px;width:1px;height:39px;background:#dedede"></div>
<div class="a" style="left:1001px;top:980px;width:1px;height:39px;background:#dedede"></div>
<div class="a" style="left:1345px;top:980px;width:1px;height:39px;background:#dedede"></div>
<div class="a" style="left:1579px;top:980px;width:1px;height:39px;background:#dedede"></div>
<div class="a" style="left:1915px;top:980px;width:1px;height:39px;background:#dedede"></div>
<div class="a" style="left:213px;top:1020px;width:1px;height:39px;background:#dedede"></div>
<div class="a" style="left:385px;top:1020px;width:1px;height:39px;background:#dedede"></div>
<div class="a" style="left:729px;top:1020px;width:1px;height:39px;background:#dedede"></div>
<div class="a" style="left:1001px;top:1020px;width:1px;height:39px;background:#dedede"></div>
<div class="a" style="left:1345px;top:1020px;width:1px;height:39px;background:#dedede"></div>
<div class="a" style="left:1579px;top:1020px;width:1px;height:39px;background:#dedede"></div>
<div class="a" style="left:1915px;top:1020px;width:1px;height:39px;background:#dedede"></div>
<div class="a" style="left:213px;top:1060px;width:1px;height:39px;background:#dedede"></div>
<div class="a" style="left:385px;top:1060px;width:1px;height:39px;background:#dedede"></div>
<div class="a" style="left:729px;top:1060px;width:1px;height:39px;background:#dedede"></div>
<div class="a" style="left:1001px;top:1060px;width:1px;height:39px;background:#dedede"></div>
<div class="a" style="left:1345px;top:1060px;width:1px;height:39px;background:#dedede"></div>
<div class="a" style="left:1579px;top:1060px;width:1px;height:39px;background:#dedede"></div>
<div class="a" style="left:1915px;top:1060px;width:1px;height:39px;background:#dedede"></div>
<div class="a" style="left:213px;top:1100px;width:1px;height:39px;background:#dedede"></div>
<div class="a" style="left:385px;top:1100px;width:1px;height:39px;background:#dedede"></div>
<div class="a" style="left:729px;top:1100px;width:1px;height:39px;background:#dedede"></div>
<div class="a" style="left:1001px;top:1100px;width:1px;height:39px;background:#dedede"></div>
<div class="a" style="left:1345px;top:1100px;width:1px;height:39px;background:#dedede"></div>
<div class="a" style="left:1579px;top:1100px;width:1px;height:39px;background:#dedede"></div>
<div class="a" style="left:1915px;top:1100px;width:1px;height:39px;background:#dedede"></div>
<div class="t " style="left:62.97px;top:67.79px;font-size:26.00px;line-height:26.00px;color:#1f6b3a;transform:scaleX(0.9700);transform-origin:0 50%;">1</div>
<div class="t " style="left:62.97px;top:107.79px;font-size:26.00px;line-height:26.00px;color:#616161;transform:scaleX(0.9700);transform-origin:0 50%;">2</div>
<div class="t " style="left:62.97px;top:147.79px;font-size:26.00px;line-height:26.00px;color:#616161;transform:scaleX(0.9700);transform-origin:0 50%;">3</div>
<div class="t " style="left:62.97px;top:187.79px;font-size:26.00px;line-height:26.00px;color:#616161;transform:scaleX(0.9700);transform-origin:0 50%;">4</div>
<div class="t " style="left:62.97px;top:227.79px;font-size:26.00px;line-height:26.00px;color:#616161;transform:scaleX(0.9700);transform-origin:0 50%;">5</div>
<div class="t " style="left:62.97px;top:267.79px;font-size:26.00px;line-height:26.00px;color:#616161;transform:scaleX(0.9700);transform-origin:0 50%;">6</div>
<div class="t " style="left:62.97px;top:307.79px;font-size:26.00px;line-height:26.00px;color:#616161;transform:scaleX(0.9700);transform-origin:0 50%;">7</div>
<div class="t " style="left:62.97px;top:347.79px;font-size:26.00px;line-height:26.00px;color:#616161;transform:scaleX(0.9700);transform-origin:0 50%;">8</div>
<div class="t " style="left:62.97px;top:387.79px;font-size:26.00px;line-height:26.00px;color:#616161;transform:scaleX(0.9700);transform-origin:0 50%;">9</div>
<div class="t " style="left:48.95px;top:427.79px;font-size:26.00px;line-height:26.00px;color:#616161;transform:scaleX(0.9700);transform-origin:0 50%;">10</div>
<div class="t " style="left:50.82px;top:467.79px;font-size:26.00px;line-height:26.00px;color:#616161;transform:scaleX(0.9700);transform-origin:0 50%;">11</div>
<div class="t " style="left:48.95px;top:507.79px;font-size:26.00px;line-height:26.00px;color:#616161;transform:scaleX(0.9700);transform-origin:0 50%;">12</div>
<div class="t " style="left:48.95px;top:547.79px;font-size:26.00px;line-height:26.00px;color:#616161;transform:scaleX(0.9700);transform-origin:0 50%;">13</div>
<div class="t " style="left:48.95px;top:587.79px;font-size:26.00px;line-height:26.00px;color:#616161;transform:scaleX(0.9700);transform-origin:0 50%;">14</div>
<div class="t " style="left:48.95px;top:627.79px;font-size:26.00px;line-height:26.00px;color:#616161;transform:scaleX(0.9700);transform-origin:0 50%;">15</div>
<div class="t " style="left:48.95px;top:667.79px;font-size:26.00px;line-height:26.00px;color:#616161;transform:scaleX(0.9700);transform-origin:0 50%;">16</div>
<div class="t " style="left:48.95px;top:707.79px;font-size:26.00px;line-height:26.00px;color:#616161;transform:scaleX(0.9700);transform-origin:0 50%;">17</div>
<div class="t " style="left:48.95px;top:747.79px;font-size:26.00px;line-height:26.00px;color:#616161;transform:scaleX(0.9700);transform-origin:0 50%;">18</div>
<div class="t " style="left:48.95px;top:787.79px;font-size:26.00px;line-height:26.00px;color:#616161;transform:scaleX(0.9700);transform-origin:0 50%;">19</div>
<div class="t " style="left:48.95px;top:827.79px;font-size:26.00px;line-height:26.00px;color:#616161;transform:scaleX(0.9700);transform-origin:0 50%;">20</div>
<div class="t " style="left:48.95px;top:867.79px;font-size:26.00px;line-height:26.00px;color:#616161;transform:scaleX(0.9700);transform-origin:0 50%;">21</div>
<div class="t " style="left:48.95px;top:907.79px;font-size:26.00px;line-height:26.00px;color:#616161;transform:scaleX(0.9700);transform-origin:0 50%;">22</div>
<div class="t " style="left:48.95px;top:947.79px;font-size:26.00px;line-height:26.00px;color:#616161;transform:scaleX(0.9700);transform-origin:0 50%;">23</div>
<div class="t " style="left:48.95px;top:987.79px;font-size:26.00px;line-height:26.00px;color:#616161;transform:scaleX(0.9700);transform-origin:0 50%;">24</div>
<div class="t " style="left:48.95px;top:1027.79px;font-size:26.00px;line-height:26.00px;color:#616161;transform:scaleX(0.9700);transform-origin:0 50%;">25</div>
<div class="t " style="left:48.95px;top:1067.79px;font-size:26.00px;line-height:26.00px;color:#616161;transform:scaleX(0.9700);transform-origin:0 50%;">26</div>
<div class="t " style="left:48.95px;top:1107.79px;font-size:26.00px;line-height:26.00px;color:#616161;transform:scaleX(0.9700);transform-origin:0 50%;">27</div>
<div class="a" style="left:0;top:0"><span class="t" style="left:90.40px;top:67.79px;font-size:26.00px;line-height:26.00px;color:#000;transform:scaleX(0.9865);transform-origin:0 50%;-webkit-text-stroke:0.25px #000;">Updated a</span><span class="t" style="left:211.70px;top:67.79px;font-size:26.00px;line-height:26.00px;color:#000;transform:scaleX(0.5396);transform-origin:0 50%;-webkit-text-stroke:0.25px #000;">t</span><span class="t" style="left:216.40px;top:67.79px;font-size:26.00px;line-height:26.00px;color:#000;transform:scaleX(0.3182);transform-origin:0 50%;-webkit-text-stroke:0.25px #000;">:</span><span class="t" style="left:219px;top:67.8px;font-size:26px;line-height:26px"> </span><span class="t" style="left:226.40px;top:67.79px;font-size:26.00px;line-height:26.00px;color:#000;transform:scaleX(1.0233);transform-origin:0 50%;-webkit-text-stroke:0.25px #000;">12/12/2025, 10:34:07</span></div>
<div class="t " style="left:218.00px;top:107.79px;font-size:26.00px;line-height:26.00px;color:#000;transform:scaleX(1.0068);transform-origin:0 50%;-webkit-text-stroke:0.25px #000;">Symbol</div>
<div class="t " style="left:390.00px;top:107.79px;font-size:26.00px;line-height:26.00px;color:#000;transform:scaleX(1.0048);transform-origin:0 50%;-webkit-text-stroke:0.25px #000;">Name</div>
<div class="t " style="left:734.00px;top:107.79px;font-size:26.00px;line-height:26.00px;color:#000;transform:scaleX(1.0239);transform-origin:0 50%;-webkit-text-stroke:0.25px #000;">Country</div>
<div class="t " style="left:1006.00px;top:107.79px;font-size:26.00px;line-height:26.00px;color:#000;transform:scaleX(0.9943);transform-origin:0 50%;-webkit-text-stroke:0.25px #000;">Date</div>
<div class="t " style="left:1350.00px;top:107.79px;font-size:26.00px;line-height:26.00px;color:#000;transform:scaleX(0.9473);transform-origin:0 50%;-webkit-text-stroke:0.25px #000;">Type</div>
<div class="t " style="left:1584.00px;top:107.79px;font-size:26.00px;line-height:26.00px;color:#000;transform:scaleX(1.0073);transform-origin:0 50%;-webkit-text-stroke:0.25px #000;">Last</div>
<div class="t " style="left:1920.00px;top:107.79px;font-size:26.00px;line-height:26.00px;color:#000;transform:scaleX(1.0297);transform-origin:0 50%;-webkit-text-stroke:0.25px #000;">Unit</div>
<div class="t " style="left:218.00px;top:147.79px;font-size:26.00px;line-height:26.00px;color:#000;transform:scaleX(0.9200);transform-origin:0 50%;-webkit-text-stroke:0.25px #000;">SPX:IND</div>
<div class="t " style="left:390.00px;top:147.79px;font-size:26.00px;line-height:26.00px;color:#000;transform:scaleX(0.9672);transform-origin:0 50%;-webkit-text-stroke:0.25px #000;">US500</div>
<div class="t " style="left:734.00px;top:147.79px;font-size:26.00px;line-height:26.00px;color:#000;transform:scaleX(0.9969);transform-origin:0 50%;-webkit-text-stroke:0.25px #000;">United States</div>
<div class="t " style="left:1006.00px;top:147.79px;font-size:26.00px;line-height:26.00px;color:#000;transform:scaleX(1.0047);transform-origin:0 50%;-webkit-text-stroke:0.25px #000;">2025-12-12T10:32:53.953</div>
<div class="t " style="left:1350.00px;top:147.79px;font-size:26.00px;line-height:26.00px;color:#000;transform:scaleX(1.0054);transform-origin:0 50%;-webkit-text-stroke:0.25px #000;">index</div>
<div class="t " style="left:1826.27px;top:147.79px;font-size:26.00px;line-height:26.00px;color:#000;transform:scaleX(1.0079);transform-origin:0 50%;-webkit-text-stroke:0.25px #000;">11-Nov</div>
<div class="t " style="left:1920.00px;top:147.79px;font-size:26.00px;line-height:26.00px;color:#000;transform:scaleX(0.9701);transform-origin:0 50%;-webkit-text-stroke:0.25px #000;">Index Points</div>
<div class="t " style="left:218.00px;top:187.79px;font-size:26.00px;line-height:26.00px;color:#000;transform:scaleX(0.9875);transform-origin:0 50%;-webkit-text-stroke:0.25px #000;">INDU:IND</div>
<div class="t " style="left:390.00px;top:187.79px;font-size:26.00px;line-height:26.00px;color:#000;transform:scaleX(0.9565);transform-origin:0 50%;-webkit-text-stroke:0.25px #000;">US30</div>
<div class="t " style="left:734.00px;top:187.79px;font-size:26.00px;line-height:26.00px;color:#000;transform:scaleX(0.9969);transform-origin:0 50%;-webkit-text-stroke:0.25px #000;">United States</div>
<div class="t " style="left:1006.00px;top:187.79px;font-size:26.00px;line-height:26.00px;color:#000;transform:scaleX(1.0047);transform-origin:0 50%;-webkit-text-stroke:0.25px #000;">2025-12-12T10:33:31.617</div>
<div class="t " style="left:1350.00px;top:187.79px;font-size:26.00px;line-height:26.00px;color:#000;transform:scaleX(1.0054);transform-origin:0 50%;-webkit-text-stroke:0.25px #000;">index</div>
<div class="t " style="left:1838.78px;top:187.79px;font-size:26.00px;line-height:26.00px;color:#000;transform:scaleX(0.9888);transform-origin:0 50%;-webkit-text-stroke:0.25px #000;">28-Jul</div>
<div class="t " style="left:1920.00px;top:187.79px;font-size:26.00px;line-height:26.00px;color:#000;transform:scaleX(0.9701);transform-origin:0 50%;-webkit-text-stroke:0.25px #000;">Index Points</div>
<div class="t " style="left:218.00px;top:227.79px;font-size:26.00px;line-height:26.00px;color:#000;transform:scaleX(0.9832);transform-origin:0 50%;-webkit-text-stroke:0.25px #000;">US100:IND</div>
<div class="t " style="left:390.00px;top:227.79px;font-size:26.00px;line-height:26.00px;color:#000;transform:scaleX(0.9672);transform-origin:0 50%;-webkit-text-stroke:0.25px #000;">US100</div>
<div class="t " style="left:734.00px;top:227.79px;font-size:26.00px;line-height:26.00px;color:#000;transform:scaleX(0.9969);transform-origin:0 50%;-webkit-text-stroke:0.25px #000;">United States</div>
<div class="t " style="left:1006.00px;top:227.79px;font-size:26.00px;line-height:26.00px;color:#000;transform:scaleX(1.0047);transform-origin:0 50%;-webkit-text-stroke:0.25px #000;">2025-12-12T10:33:15.687</div>
<div class="t " style="left:1350.00px;top:227.79px;font-size:26.00px;line-height:26.00px;color:#000;transform:scaleX(1.0054);transform-origin:0 50%;-webkit-text-stroke:0.25px #000;">index</div>
<div class="t " style="left:1826.27px;top:227.79px;font-size:26.00px;line-height:26.00px;color:#000;transform:scaleX(0.9847);transform-origin:0 50%;-webkit-text-stroke:0.25px #000;">30-Dec</div>
<div class="t " style="left:1920.00px;top:227.79px;font-size:26.00px;line-height:26.00px;color:#000;transform:scaleX(0.9701);transform-origin:0 50%;-webkit-text-stroke:0.25px #000;">Index Points</div>
<div class="t " style="left:218.00px;top:267.79px;font-size:26.00px;line-height:26.00px;color:#000;transform:scaleX(0.9717);transform-origin:0 50%;-webkit-text-stroke:0.25px #000;">CCMP:IND</div>
<div class="t " style="left:390.00px;top:267.79px;font-size:26.00px;line-height:26.00px;color:#000;transform:scaleX(0.9459);transform-origin:0 50%;-webkit-text-stroke:0.25px #000;">USND</div>
<div class="t " style="left:734.00px;top:267.79px;font-size:26.00px;line-height:26.00px;color:#000;transform:scaleX(0.9969);transform-origin:0 50%;-webkit-text-stroke:0.25px #000;">United States</div>
<div class="t " style="left:1006.00px;top:267.79px;font-size:26.00px;line-height:26.00px;color:#000;transform:scaleX(1.0114);transform-origin:0 50%;-webkit-text-stroke:0.25px #000;">2025-12-11T20:59:59</div>
<div class="t " style="left:1350.00px;top:267.79px;font-size:26.00px;line-height:26.00px;color:#000;transform:scaleX(1.0054);transform-origin:0 50%;-webkit-text-stroke:0.25px #000;">index</div>
<div class="t " style="left:1840.77px;top:267.79px;font-size:26.00px;line-height:26.00px;color:#000;transform:scaleX(0.9806);transform-origin:0 50%;-webkit-text-stroke:0.25px #000;">4-Aug</div>
<div class="t " style="left:1920.00px;top:267.79px;font-size:26.00px;line-height:26.00px;color:#000;transform:scaleX(0.9701);transform-origin:0 50%;-webkit-text-stroke:0.25px #000;">Index Points</div>
<div class="t " style="left:218.00px;top:307.79px;font-size:26.00px;line-height:26.00px;color:#000;transform:scaleX(0.9844);transform-origin:0 50%;-webkit-text-stroke:0.25px #000;">MID:IND</div>
<div class="t " style="left:390.00px;top:307.79px;font-size:26.00px;line-height:26.00px;color:#000;transform:scaleX(0.9672);transform-origin:0 50%;-webkit-text-stroke:0.25px #000;">US400</div>
<div class="t " style="left:734.00px;top:307.79px;font-size:26.00px;line-height:26.00px;color:#000;transform:scaleX(0.9969);transform-origin:0 50%;-webkit-text-stroke:0.25px #000;">United States</div>
<div class="t " style="left:1006.00px;top:307.79px;font-size:26.00px;line-height:26.00px;color:#000;transform:scaleX(1.0114);transform-origin:0 50%;-webkit-text-stroke:0.25px #000;">2025-12-11T00:00:00</div>
<div class="t " style="left:1350.00px;top:307.79px;font-size:26.00px;line-height:26.00px;color:#000;transform:scaleX(1.0054);transform-origin:0 50%;-webkit-text-stroke:0.25px #000;">index</div>
<div class="t " style="left:1831.95px;top:307.79px;font-size:26.00px;line-height:26.00px;color:#000;transform:scaleX(0.9848);transform-origin:0 50%;-webkit-text-stroke:0.25px #000;">17-Apr</div>
<div class="t " style="left:1920.00px;top:307.79px;font-size:26.00px;line-height:26.00px;color:#000;transform:scaleX(0.9701);transform-origin:0 50%;-webkit-text-stroke:0.25px #000;">Index Points</div>
<div class="t " style="left:218.00px;top:347.79px;font-size:26.00px;line-height:26.00px;color:#000;transform:scaleX(0.9079);transform-origin:0 50%;-webkit-text-stroke:0.25px #000;">RTY:IND</div>
<div class="t " style="left:390.00px;top:347.79px;font-size:26.00px;line-height:26.00px;color:#000;transform:scaleX(0.9759);transform-origin:0 50%;-webkit-text-stroke:0.25px #000;">US2000</div>
<div class="t " style="left:734.00px;top:347.79px;font-size:26.00px;line-height:26.00px;color:#000;transform:scaleX(0.9969);transform-origin:0 50%;-webkit-text-stroke:0.25px #000;">United States</div>
<div class="t " style="left:1006.00px;top:347.79px;font-size:26.00px;line-height:26.00px;color:#000;transform:scaleX(1.0114);transform-origin:0 50%;-webkit-text-stroke:0.25px #000;">2025-12-11T20:59:38</div>
<div class="t " style="left:1350.00px;top:347.79px;font-size:26.00px;line-height:26.00px;color:#000;transform:scaleX(1.0054);transform-origin:0 50%;-webkit-text-stroke:0.25px #000;">index</div>
<div class="t " style="left:1842.08px;top:347.79px;font-size:26.00px;line-height:26.00px;color:#000;transform:scaleX(0.9823);transform-origin:0 50%;-webkit-text-stroke:0.25px #000;">2-Feb</div>
<div class="t " style="left:1920.00px;top:347.79px;font-size:26.00px;line-height:26.00px;color:#000;transform:scaleX(0.9701);transform-origin:0 50%;-webkit-text-stroke:0.25px #000;">Index Points</div>
<div class="t " style="left:218.00px;top:387.79px;font-size:26.00px;line-height:26.00px;color:#000;transform:scaleX(0.9477);transform-origin:0 50%;-webkit-text-stroke:0.25px #000;">VIX:IND</div>
<div class="t " style="left:390.00px;top:387.79px;font-size:26.00px;line-height:26.00px;color:#000;transform:scaleX(0.8997);transform-origin:0 50%;-webkit-text-stroke:0.25px #000;">USVIX</div>
<div class="t " style="left:734.00px;top:387.79px;font-size:26.00px;line-height:26.00px;color:#000;transform:scaleX(0.9969);transform-origin:0 50%;-webkit-text-stroke:0.25px #000;">United States</div>
<div class="t " style="left:1006.00px;top:387.79px;font-size:26.00px;line-height:26.00px;color:#000;transform:scaleX(1.0042);transform-origin:0 50%;-webkit-text-stroke:0.25px #000;">2025-12-12T10:33:16.48</div>
<div class="t " style="left:1350.00px;top:387.79px;font-size:26.00px;line-height:26.00px;color:#000;transform:scaleX(1.0054);transform-origin:0 50%;-webkit-text-stroke:0.25px #000;">index</div>
<div class="t " style="left:1830.01px;top:387.79px;font-size:26.00px;line-height:26.00px;color:#000;transform:scaleX(0.9911);transform-origin:0 50%;-webkit-text-stroke:0.25px #000;">15-Jan</div>
<div class="t " style="left:218.00px;top:427.79px;font-size:26.00px;line-height:26.00px;color:#000;transform:scaleX(0.9382);transform-origin:0 50%;-webkit-text-stroke:0.25px #000;">NKY:IND</div>
<div class="t " style="left:390.00px;top:427.79px;font-size:26.00px;line-height:26.00px;color:#000;transform:scaleX(0.9388);transform-origin:0 50%;-webkit-text-stroke:0.25px #000;">JP225</div>
<div class="t " style="left:734.00px;top:427.79px;font-size:26.00px;line-height:26.00px;color:#000;transform:scaleX(0.9485);transform-origin:0 50%;-webkit-text-stroke:0.25px #000;">Japan</div>
<div class="t " style="left:1006.00px;top:427.79px;font-size:26.00px;line-height:26.00px;color:#000;transform:scaleX(1.0047);transform-origin:0 50%;-webkit-text-stroke:0.25px #000;">2025-12-12T10:33:48.777</div>
<div class="t " style="left:1350.00px;top:427.79px;font-size:26.00px;line-height:26.00px;color:#000;transform:scaleX(1.0054);transform-origin:0 50%;-webkit-text-stroke:0.25px #000;">index</div>
<div class="t " style="left:1831.95px;top:427.79px;font-size:26.00px;line-height:26.00px;color:#000;transform:scaleX(0.9848);transform-origin:0 50%;-webkit-text-stroke:0.25px #000;">22-Apr</div>
<div class="t " style="left:1920.00px;top:427.79px;font-size:26.00px;line-height:26.00px;color:#000;transform:scaleX(0.9701);transform-origin:0 50%;-webkit-text-stroke:0.25px #000;">Index Points</div>
<div class="t " style="left:218.00px;top:467.79px;font-size:26.00px;line-height:26.00px;color:#000;transform:scaleX(0.9445);transform-origin:0 50%;-webkit-text-stroke:0.25px #000;">UKX:IND</div>
<div class="t " style="left:390.00px;top:467.79px;font-size:26.00px;line-height:26.00px;color:#000;transform:scaleX(0.9736);transform-origin:0 50%;-webkit-text-stroke:0.25px #000;">GB100</div>
<div class="t " style="left:734.00px;top:467.79px;font-size:26.00px;line-height:26.00px;color:#000;transform:scaleX(0.9957);transform-origin:0 50%;-webkit-text-stroke:0.25px #000;">United Kingdom</div>
<div class="t " style="left:1006.00px;top:467.79px;font-size:26.00px;line-height:26.00px;color:#000;transform:scaleX(1.0036);transform-origin:0 50%;-webkit-text-stroke:0.25px #000;">2025-12-12T10:33:55</div>
<div class="t " style="left:1350.00px;top:467.79px;font-size:26.00px;line-height:26.00px;color:#000;transform:scaleX(1.0054);transform-origin:0 50%;-webkit-text-stroke:0.25px #000;">index</div>
<div class="t " style="left:1826.09px;top:467.79px;font-size:26.00px;line-height:26.00px;color:#000;transform:scaleX(0.9865);transform-origin:0 50%;-webkit-text-stroke:0.25px #000;">14-Aug</div>
<div class="t " style="left:1920.00px;top:467.79px;font-size:26.00px;line-height:26.00px;color:#000;transform:scaleX(0.9701);transform-origin:0 50%;-webkit-text-stroke:0.25px #000;">Index Points</div>
<div class="t " style="left:218.00px;top:507.79px;font-size:26.00px;line-height:26.00px;color:#000;transform:scaleX(0.9384);transform-origin:0 50%;-webkit-text-stroke:0.25px #000;">BVQA:IND</div>
<div class="t " style="left:390.00px;top:507.79px;font-size:26.00px;line-height:26.00px;color:#000;transform:scaleX(0.9860);transform-origin:0 50%;-webkit-text-stroke:0.25px #000;">Ecuador General</div>
<div class="t " style="left:734.00px;top:507.79px;font-size:26.00px;line-height:26.00px;color:#000;transform:scaleX(0.9933);transform-origin:0 50%;-webkit-text-stroke:0.25px #000;">Ecuador</div>
<div class="t " style="left:1006.00px;top:507.79px;font-size:26.00px;line-height:26.00px;color:#000;transform:scaleX(1.0036);transform-origin:0 50%;-webkit-text-stroke:0.25px #000;">2025-12-10T00:00:00</div>
<div class="t " style="left:1350.00px;top:507.79px;font-size:26.00px;line-height:26.00px;color:#000;transform:scaleX(1.0054);transform-origin:0 50%;-webkit-text-stroke:0.25px #000;">index</div>
<div class="t " style="left:1840.95px;top:507.79px;font-size:26.00px;line-height:26.00px;color:#000;transform:scaleX(0.9783);transform-origin:0 50%;-webkit-text-stroke:0.25px #000;">9-Nov</div>
<div class="t " style="left:1920.00px;top:507.79px;font-size:26.00px;line-height:26.00px;color:#000;transform:scaleX(0.9701);transform-origin:0 50%;-webkit-text-stroke:0.25px #000;">Index Points</div>
<div class="t " style="left:218.00px;top:547.79px;font-size:26.00px;line-height:26.00px;color:#000;transform:scaleX(0.9445);transform-origin:0 50%;-webkit-text-stroke:0.25px #000;">DAX:IND</div>
<div class="t " style="left:390.00px;top:547.79px;font-size:26.00px;line-height:26.00px;color:#000;transform:scaleX(0.9565);transform-origin:0 50%;-webkit-text-stroke:0.25px #000;">DE40</div>
<div class="t " style="left:734.00px;top:547.79px;font-size:26.00px;line-height:26.00px;color:#000;transform:scaleX(0.9933);transform-origin:0 50%;-webkit-text-stroke:0.25px #000;">Germany</div>
<div class="t " style="left:1006.00px;top:547.79px;font-size:26.00px;line-height:26.00px;color:#000;transform:scaleX(1.0047);transform-origin:0 50%;-webkit-text-stroke:0.25px #000;">2025-12-12T10:33:54.037</div>
<div class="t " style="left:1350.00px;top:547.79px;font-size:26.00px;line-height:26.00px;color:#000;transform:scaleX(1.0054);transform-origin:0 50%;-webkit-text-stroke:0.25px #000;">index</div>
<div class="t " style="left:1826.09px;top:547.79px;font-size:26.00px;line-height:26.00px;color:#000;transform:scaleX(0.9865);transform-origin:0 50%;-webkit-text-stroke:0.25px #000;">20-Sep</div>
<div class="t " style="left:1920.00px;top:547.79px;font-size:26.00px;line-height:26.00px;color:#000;transform:scaleX(0.9701);transform-origin:0 50%;-webkit-text-stroke:0.25px #000;">Index Points</div>
<div class="t " style="left:218.00px;top:587.79px;font-size:26.00px;line-height:26.00px;color:#000;transform:scaleX(0.9655);transform-origin:0 50%;-webkit-text-stroke:0.25px #000;">CAC:IND</div>
<div class="t " style="left:390.00px;top:587.79px;font-size:26.00px;line-height:26.00px;color:#000;transform:scaleX(0.9313);transform-origin:0 50%;-webkit-text-stroke:0.25px #000;">FR40</div>
<div class="t " style="left:734.00px;top:587.79px;font-size:26.00px;line-height:26.00px;color:#000;transform:scaleX(0.9665);transform-origin:0 50%;-webkit-text-stroke:0.25px #000;">France</div>
<div class="t " style="left:1006.00px;top:587.79px;font-size:26.00px;line-height:26.00px;color:#000;transform:scaleX(1.0047);transform-origin:0 50%;-webkit-text-stroke:0.25px #000;">2025-12-12T10:33:08.223</div>
<div class="t " style="left:1350.00px;top:587.79px;font-size:26.00px;line-height:26.00px;color:#000;transform:scaleX(1.0054);transform-origin:0 50%;-webkit-text-stroke:0.25px #000;">index</div>
<div class="t " style="left:1831.95px;top:587.79px;font-size:26.00px;line-height:26.00px;color:#000;transform:scaleX(1.0097);transform-origin:0 50%;-webkit-text-stroke:0.25px #000;">11-Apr</div>
<div class="t " style="left:1920.00px;top:587.79px;font-size:26.00px;line-height:26.00px;color:#000;transform:scaleX(0.9701);transform-origin:0 50%;-webkit-text-stroke:0.25px #000;">Index Points</div>
<div class="t " style="left:218.00px;top:627.79px;font-size:26.00px;line-height:26.00px;color:#000;transform:scaleX(0.9266);transform-origin:0 50%;-webkit-text-stroke:0.25px #000;">FTSEMIB:IND</div>
<div class="t " style="left:390.00px;top:627.79px;font-size:26.00px;line-height:26.00px;color:#000;transform:scaleX(0.9265);transform-origin:0 50%;-webkit-text-stroke:0.25px #000;">IT40</div>
<div class="t " style="left:734.00px;top:627.79px;font-size:26.00px;line-height:26.00px;color:#000;transform:scaleX(1.0234);transform-origin:0 50%;-webkit-text-stroke:0.25px #000;">Italy</div>
<div class="t " style="left:1006.00px;top:627.79px;font-size:26.00px;line-height:26.00px;color:#000;transform:scaleX(1.0047);transform-origin:0 50%;-webkit-text-stroke:0.25px #000;">2025-12-12T10:33:44.633</div>
<div class="t " style="left:1350.00px;top:627.79px;font-size:26.00px;line-height:26.00px;color:#000;transform:scaleX(1.0054);transform-origin:0 50%;-webkit-text-stroke:0.25px #000;">index</div>
<div class="t " style="left:1831.95px;top:627.79px;font-size:26.00px;line-height:26.00px;color:#000;transform:scaleX(0.9848);transform-origin:0 50%;-webkit-text-stroke:0.25px #000;">12-Apr</div>
<div class="t " style="left:1920.00px;top:627.79px;font-size:26.00px;line-height:26.00px;color:#000;transform:scaleX(0.9701);transform-origin:0 50%;-webkit-text-stroke:0.25px #000;">Index Points</div>
<div class="t " style="left:218.00px;top:667.79px;font-size:26.00px;line-height:26.00px;color:#000;transform:scaleX(0.9366);transform-origin:0 50%;-webkit-text-stroke:0.25px #000;">IBEX:IND</div>
<div class="t " style="left:390.00px;top:667.79px;font-size:26.00px;line-height:26.00px;color:#000;transform:scaleX(0.9246);transform-origin:0 50%;-webkit-text-stroke:0.25px #000;">ES35</div>
<div class="t " style="left:734.00px;top:667.79px;font-size:26.00px;line-height:26.00px;color:#000;transform:scaleX(0.9863);transform-origin:0 50%;-webkit-text-stroke:0.25px #000;">Spain</div>
<div class="t " style="left:1006.00px;top:667.79px;font-size:26.00px;line-height:26.00px;color:#000;transform:scaleX(1.0047);transform-origin:0 50%;-webkit-text-stroke:0.25px #000;">2025-12-12T10:32:59.463</div>
<div class="t " style="left:1350.00px;top:667.79px;font-size:26.00px;line-height:26.00px;color:#000;transform:scaleX(1.0054);transform-origin:0 50%;-webkit-text-stroke:0.25px #000;">index</div>
<div class="t " style="left:1830.01px;top:667.79px;font-size:26.00px;line-height:26.00px;color:#000;transform:scaleX(0.9911);transform-origin:0 50%;-webkit-text-stroke:0.25px #000;">29-Jun</div>
<div class="t " style="left:1920.00px;top:667.79px;font-size:26.00px;line-height:26.00px;color:#000;transform:scaleX(0.9701);transform-origin:0 50%;-webkit-text-stroke:0.25px #000;">Index Points</div>
<div class="t " style="left:218.00px;top:707.79px;font-size:26.00px;line-height:26.00px;color:#000;transform:scaleX(0.9741);transform-origin:0 50%;-webkit-text-stroke:0.25px #000;">AS30:IND</div>
<div class="t " style="left:390.00px;top:707.79px;font-size:26.00px;line-height:26.00px;color:#000;transform:scaleX(0.9406);transform-origin:0 50%;-webkit-text-stroke:0.25px #000;">ASX All Share</div>
<div class="t " style="left:734.00px;top:707.79px;font-size:26.00px;line-height:26.00px;color:#000;transform:scaleX(1.0139);transform-origin:0 50%;-webkit-text-stroke:0.25px #000;">Australia</div>
<div class="t " style="left:1006.00px;top:707.79px;font-size:26.00px;line-height:26.00px;color:#000;transform:scaleX(1.0036);transform-origin:0 50%;-webkit-text-stroke:0.25px #000;">2025-12-12T05:04:59</div>
<div class="t " style="left:1350.00px;top:707.79px;font-size:26.00px;line-height:26.00px;color:#000;transform:scaleX(1.0054);transform-origin:0 50%;-webkit-text-stroke:0.25px #000;">index</div>
<div class="t " style="left:1840.77px;top:707.79px;font-size:26.00px;line-height:26.00px;color:#000;transform:scaleX(0.9806);transform-origin:0 50%;-webkit-text-stroke:0.25px #000;">4-Aug</div>
<div class="t " style="left:1920.00px;top:707.79px;font-size:26.00px;line-height:26.00px;color:#000;transform:scaleX(0.9701);transform-origin:0 50%;-webkit-text-stroke:0.25px #000;">Index Points</div>
<div class="t " style="left:218.00px;top:747.79px;font-size:26.00px;line-height:26.00px;color:#000;transform:scaleX(0.9741);transform-origin:0 50%;-webkit-text-stroke:0.25px #000;">AS51:IND</div>
<div class="t " style="left:390.00px;top:747.79px;font-size:26.00px;line-height:26.00px;color:#000;transform:scaleX(0.9393);transform-origin:0 50%;-webkit-text-stroke:0.25px #000;">ASX200</div>
<div class="t " style="left:734.00px;top:747.79px;font-size:26.00px;line-height:26.00px;color:#000;transform:scaleX(1.0139);transform-origin:0 50%;-webkit-text-stroke:0.25px #000;">Australia</div>
<div class="t " style="left:1006.00px;top:747.79px;font-size:26.00px;line-height:26.00px;color:#000;transform:scaleX(1.0047);transform-origin:0 50%;-webkit-text-stroke:0.25px #000;">2025-12-12T10:33:54.287</div>
<div class="t " style="left:1350.00px;top:747.79px;font-size:26.00px;line-height:26.00px;color:#000;transform:scaleX(1.0054);transform-origin:0 50%;-webkit-text-stroke:0.25px #000;">index</div>
<div class="t " style="left:1826.09px;top:747.79px;font-size:26.00px;line-height:26.00px;color:#000;transform:scaleX(0.9865);transform-origin:0 50%;-webkit-text-stroke:0.25px #000;">27-Sep</div>
<div class="t " style="left:1920.00px;top:747.79px;font-size:26.00px;line-height:26.00px;color:#000;transform:scaleX(0.9701);transform-origin:0 50%;-webkit-text-stroke:0.25px #000;">Index Points</div>
<div class="t " style="left:218.00px;top:787.79px;font-size:26.00px;line-height:26.00px;color:#000;transform:scaleX(0.9741);transform-origin:0 50%;-webkit-text-stroke:0.25px #000;">AS52:IND</div>
<div class="t " style="left:390.00px;top:787.79px;font-size:26.00px;line-height:26.00px;color:#000;transform:scaleX(0.9719);transform-origin:0 50%;-webkit-text-stroke:0.25px #000;">AU50</div>
<div class="t " style="left:734.00px;top:787.79px;font-size:26.00px;line-height:26.00px;color:#000;transform:scaleX(1.0139);transform-origin:0 50%;-webkit-text-stroke:0.25px #000;">Australia</div>
<div class="t " style="left:1006.00px;top:787.79px;font-size:26.00px;line-height:26.00px;color:#000;transform:scaleX(1.0036);transform-origin:0 50%;-webkit-text-stroke:0.25px #000;">2025-12-12T05:00:14</div>
<div class="t " style="left:1350.00px;top:787.79px;font-size:26.00px;line-height:26.00px;color:#000;transform:scaleX(1.0054);transform-origin:0 50%;-webkit-text-stroke:0.25px #000;">index</div>
<div class="t " style="left:1832.27px;top:787.79px;font-size:26.00px;line-height:26.00px;color:#000;transform:scaleX(0.9808);transform-origin:0 50%;-webkit-text-stroke:0.25px #000;">23-Oct</div>
<div class="t " style="left:1920.00px;top:787.79px;font-size:26.00px;line-height:26.00px;color:#000;transform:scaleX(0.9701);transform-origin:0 50%;-webkit-text-stroke:0.25px #000;">Index Points</div>
<div class="t " style="left:218.00px;top:827.79px;font-size:26.00px;line-height:26.00px;color:#000;transform:scaleX(0.9082);transform-origin:0 50%;-webkit-text-stroke:0.25px #000;">VSTOXX:IND</div>
<div class="t " style="left:390.00px;top:827.79px;font-size:26.00px;line-height:26.00px;color:#000;transform:scaleX(0.9807);transform-origin:0 50%;-webkit-text-stroke:0.25px #000;">Euro Stoxx Volatility Index</div>
<div class="t " style="left:734.00px;top:827.79px;font-size:26.00px;line-height:26.00px;color:#000;transform:scaleX(0.9546);transform-origin:0 50%;-webkit-text-stroke:0.25px #000;">Euro Area</div>
<div class="t " style="left:1006.00px;top:827.79px;font-size:26.00px;line-height:26.00px;color:#000;transform:scaleX(1.0114);transform-origin:0 50%;-webkit-text-stroke:0.25px #000;">2025-12-11T00:00:00</div>
<div class="t " style="left:1350.00px;top:827.79px;font-size:26.00px;line-height:26.00px;color:#000;transform:scaleX(1.0054);transform-origin:0 50%;-webkit-text-stroke:0.25px #000;">index</div>
<div class="t " style="left:1830.01px;top:827.79px;font-size:26.00px;line-height:26.00px;color:#000;transform:scaleX(0.9911);transform-origin:0 50%;-webkit-text-stroke:0.25px #000;">15-Jan</div>
<div class="t " style="left:1920.00px;top:827.79px;font-size:26.00px;line-height:26.00px;color:#000;transform:scaleX(0.9701);transform-origin:0 50%;-webkit-text-stroke:0.25px #000;">Index Points</div>
<div class="t " style="left:218.00px;top:867.79px;font-size:26.00px;line-height:26.00px;color:#000;transform:scaleX(0.9632);transform-origin:0 50%;-webkit-text-stroke:0.25px #000;">SHCOMP:IND</div>
<div class="t " style="left:390.00px;top:867.79px;font-size:26.00px;line-height:26.00px;color:#000;transform:scaleX(0.9411);transform-origin:0 50%;-webkit-text-stroke:0.25px #000;">SHANGHAI</div>
<div class="t " style="left:734.00px;top:867.79px;font-size:26.00px;line-height:26.00px;color:#000;transform:scaleX(0.9976);transform-origin:0 50%;-webkit-text-stroke:0.25px #000;">China</div>
<div class="t " style="left:1006.00px;top:867.79px;font-size:26.00px;line-height:26.00px;color:#000;transform:scaleX(1.0036);transform-origin:0 50%;-webkit-text-stroke:0.25px #000;">2025-12-12T06:59:36</div>
<div class="t " style="left:1350.00px;top:867.79px;font-size:26.00px;line-height:26.00px;color:#000;transform:scaleX(1.0054);transform-origin:0 50%;-webkit-text-stroke:0.25px #000;">index</div>
<div class="t " style="left:1826.09px;top:867.79px;font-size:26.00px;line-height:26.00px;color:#000;transform:scaleX(0.9865);transform-origin:0 50%;-webkit-text-stroke:0.25px #000;">24-Aug</div>
<div class="t " style="left:1920.00px;top:867.79px;font-size:26.00px;line-height:26.00px;color:#000;transform:scaleX(0.9701);transform-origin:0 50%;-webkit-text-stroke:0.25px #000;">Index Points</div>
<div class="t " style="left:218.00px;top:907.79px;font-size:26.00px;line-height:26.00px;color:#000;transform:scaleX(0.9665);transform-origin:0 50%;-webkit-text-stroke:0.25px #000;">SHSZ300:IND</div>
<div class="t " style="left:390.00px;top:907.79px;font-size:26.00px;line-height:26.00px;color:#000;transform:scaleX(0.9559);transform-origin:0 50%;-webkit-text-stroke:0.25px #000;">CSI 300</div>
<div class="t " style="left:734.00px;top:907.79px;font-size:26.00px;line-height:26.00px;color:#000;transform:scaleX(0.9976);transform-origin:0 50%;-webkit-text-stroke:0.25px #000;">China</div>
<div class="t " style="left:1006.00px;top:907.79px;font-size:26.00px;line-height:26.00px;color:#000;transform:scaleX(1.0036);transform-origin:0 50%;-webkit-text-stroke:0.25px #000;">2025-12-12T06:59:12</div>
<div class="t " style="left:1350.00px;top:907.79px;font-size:26.00px;line-height:26.00px;color:#000;transform:scaleX(1.0054);transform-origin:0 50%;-webkit-text-stroke:0.25px #000;">index</div>
<div class="t " style="left:1838.78px;top:907.79px;font-size:26.00px;line-height:26.00px;color:#000;transform:scaleX(0.9888);transform-origin:0 50%;-webkit-text-stroke:0.25px #000;">15-Jul</div>
<div class="t " style="left:1920.00px;top:907.79px;font-size:26.00px;line-height:26.00px;color:#000;transform:scaleX(0.9701);transform-origin:0 50%;-webkit-text-stroke:0.25px #000;">Index Points</div>
<div class="t " style="left:218.00px;top:947.79px;font-size:26.00px;line-height:26.00px;color:#000;transform:scaleX(0.9493);transform-origin:0 50%;-webkit-text-stroke:0.25px #000;">SSE50:IND</div>
<div class="t " style="left:390.00px;top:947.79px;font-size:26.00px;line-height:26.00px;color:#000;transform:scaleX(0.9527);transform-origin:0 50%;-webkit-text-stroke:0.25px #000;">SHANGHAI 50</div>
<div class="t " style="left:734.00px;top:947.79px;font-size:26.00px;line-height:26.00px;color:#000;transform:scaleX(0.9976);transform-origin:0 50%;-webkit-text-stroke:0.25px #000;">China</div>
<div class="t " style="left:1006.00px;top:947.79px;font-size:26.00px;line-height:26.00px;color:#000;transform:scaleX(1.0036);transform-origin:0 50%;-webkit-text-stroke:0.25px #000;">2025-12-12T06:59:54</div>
<div class="t " style="left:1350.00px;top:947.79px;font-size:26.00px;line-height:26.00px;color:#000;transform:scaleX(1.0054);transform-origin:0 50%;-webkit-text-stroke:0.25px #000;">index</div>
<div class="t " style="left:1828.05px;top:947.79px;font-size:26.00px;line-height:26.00px;color:#000;transform:scaleX(0.9804);transform-origin:0 50%;-webkit-text-stroke:0.25px #000;">12-Mar</div>
<div class="t " style="left:1920.00px;top:947.79px;font-size:26.00px;line-height:26.00px;color:#000;transform:scaleX(0.9701);transform-origin:0 50%;-webkit-text-stroke:0.25px #000;">Index Points</div>
<div class="t " style="left:218.00px;top:987.79px;font-size:26.00px;line-height:26.00px;color:#000;transform:scaleX(0.9800);transform-origin:0 50%;-webkit-text-stroke:0.25px #000;">XIN9:IND</div>
<div class="t " style="left:390.00px;top:987.79px;font-size:26.00px;line-height:26.00px;color:#000;transform:scaleX(0.9958);transform-origin:0 50%;-webkit-text-stroke:0.25px #000;">CH50</div>
<div class="t " style="left:734.00px;top:987.79px;font-size:26.00px;line-height:26.00px;color:#000;transform:scaleX(0.9976);transform-origin:0 50%;-webkit-text-stroke:0.25px #000;">China</div>
<div class="t " style="left:1006.00px;top:987.79px;font-size:26.00px;line-height:26.00px;color:#000;transform:scaleX(1.0036);transform-origin:0 50%;-webkit-text-stroke:0.25px #000;">2025-12-12T06:59:59</div>
<div class="t " style="left:1350.00px;top:987.79px;font-size:26.00px;line-height:26.00px;color:#000;transform:scaleX(1.0054);transform-origin:0 50%;-webkit-text-stroke:0.25px #000;">index</div>
<div class="t " style="left:1846.95px;top:987.79px;font-size:26.00px;line-height:26.00px;color:#000;transform:scaleX(0.9730);transform-origin:0 50%;-webkit-text-stroke:0.25px #000;">5-Oct</div>
<div class="t " style="left:1920.00px;top:987.79px;font-size:26.00px;line-height:26.00px;color:#000;transform:scaleX(0.9701);transform-origin:0 50%;-webkit-text-stroke:0.25px #000;">Index Points</div>
<div class="t " style="left:218.00px;top:1027.79px;font-size:26.00px;line-height:26.00px;color:#000;transform:scaleX(0.9246);transform-origin:0 50%;-webkit-text-stroke:0.25px #000;">SENSEX:IND</div>
<div class="t " style="left:390.00px;top:1027.79px;font-size:26.00px;line-height:26.00px;color:#000;transform:scaleX(0.8893);transform-origin:0 50%;-webkit-text-stroke:0.25px #000;">SENSEX</div>
<div class="t " style="left:734.00px;top:1027.79px;font-size:26.00px;line-height:26.00px;color:#000;transform:scaleX(1.0214);transform-origin:0 50%;-webkit-text-stroke:0.25px #000;">India</div>
<div class="t " style="left:1006.00px;top:1027.79px;font-size:26.00px;line-height:26.00px;color:#000;transform:scaleX(1.0036);transform-origin:0 50%;-webkit-text-stroke:0.25px #000;">2025-12-12T09:59:59</div>
<div class="t " style="left:1350.00px;top:1027.79px;font-size:26.00px;line-height:26.00px;color:#000;transform:scaleX(1.0054);transform-origin:0 50%;-webkit-text-stroke:0.25px #000;">index</div>
<div class="t " style="left:1830.01px;top:1027.79px;font-size:26.00px;line-height:26.00px;color:#000;transform:scaleX(0.9911);transform-origin:0 50%;-webkit-text-stroke:0.25px #000;">13-Jun</div>
<div class="t " style="left:1920.00px;top:1027.79px;font-size:26.00px;line-height:26.00px;color:#000;transform:scaleX(0.9701);transform-origin:0 50%;-webkit-text-stroke:0.25px #000;">Index Points</div>
<div class="t " style="left:218.00px;top:1067.79px;font-size:26.00px;line-height:26.00px;color:#000;transform:scaleX(0.9034);transform-origin:0 50%;-webkit-text-stroke:0.25px #000;">SPTSX:IND</div>
<div class="t " style="left:390.00px;top:1067.79px;font-size:26.00px;line-height:26.00px;color:#000;transform:scaleX(0.8424);transform-origin:0 50%;-webkit-text-stroke:0.25px #000;">TSX</div>
<div class="t " style="left:734.00px;top:1067.79px;font-size:26.00px;line-height:26.00px;color:#000;transform:scaleX(0.9978);transform-origin:0 50%;-webkit-text-stroke:0.25px #000;">Canada</div>
<div class="t " style="left:1006.00px;top:1067.79px;font-size:26.00px;line-height:26.00px;color:#000;transform:scaleX(1.0114);transform-origin:0 50%;-webkit-text-stroke:0.25px #000;">2025-12-11T21:01:29</div>
<div class="t " style="left:1350.00px;top:1067.79px;font-size:26.00px;line-height:26.00px;color:#000;transform:scaleX(1.0054);transform-origin:0 50%;-webkit-text-stroke:0.25px #000;">index</div>
<div class="t " style="left:1840.77px;top:1067.79px;font-size:26.00px;line-height:26.00px;color:#000;transform:scaleX(0.9806);transform-origin:0 50%;-webkit-text-stroke:0.25px #000;">5-Sep</div>
<div class="t " style="left:1920.00px;top:1067.79px;font-size:26.00px;line-height:26.00px;color:#000;transform:scaleX(0.9701);transform-origin:0 50%;-webkit-text-stroke:0.25px #000;">Index Points</div>
<div class="t " style="left:218.00px;top:1107.79px;font-size:26.00px;line-height:26.00px;color:#000;transform:scaleX(0.9463);transform-origin:0 50%;-webkit-text-stroke:0.25px #000;">INDEXCF:IND</div>
<div class="t " style="left:390.00px;top:1107.79px;font-size:26.00px;line-height:26.00px;color:#000;transform:scaleX(0.9220);transform-origin:0 50%;-webkit-text-stroke:0.25px #000;">MOEX</div>
<div class="t " style="left:734.00px;top:1107.79px;font-size:26.00px;line-height:26.00px;color:#000;transform:scaleX(0.9710);transform-origin:0 50%;-webkit-text-stroke:0.25px #000;">Russia</div>
<div class="t " style="left:1006.00px;top:1107.79px;font-size:26.00px;line-height:26.00px;color:#000;transform:scaleX(1.0036);transform-origin:0 50%;-webkit-text-stroke:0.25px #000;">2025-12-12T10:33:30</div>
<div class="t " style="left:1350.00px;top:1107.79px;font-size:26.00px;line-height:26.00px;color:#000;transform:scaleX(1.0054);transform-origin:0 50%;-webkit-text-stroke:0.25px #000;">index</div>
<div class="t " style="left:1838.78px;top:1107.79px;font-size:26.00px;line-height:26.00px;color:#000;transform:scaleX(0.9888);transform-origin:0 50%;-webkit-text-stroke:0.25px #000;">28-Jul</div>
<div class="t " style="left:1920.00px;top:1107.79px;font-size:26.00px;line-height:26.00px;color:#000;transform:scaleX(0.9701);transform-origin:0 50%;-webkit-text-stroke:0.25px #000;">Index Points</div>
<div class="a" style="left:85px;top:102px;width:1px;height:1040px;background:#c6c6c6"></div>
<div class="a" style="left:82px;top:0;width:4px;height:60px;background:#c0c0c0"></div>
<div class="a" style="left:0;top:56px;width:86px;height:4px;background:#c0c0c0"></div>
<svg class="a" style="left:0;top:0" width="1" height="1"><polygon points="77.8,28.3 77.8,51.8 54.3,51.8" fill="#b8b8b8"/></svg>
<div class="a" style="left:86px;top:56px;width:130px;height:4px;background:#397d49"></div>
<div class="a" style="left:82px;top:60px;width:4px;height:42px;background:#397d49"></div>
<div class="a" style="left:212px;top:56px;width:4px;height:38px;background:#397d49"></div>
<div class="a" style="left:82px;top:98px;width:126px;height:4px;background:#397d49"></div>
<div class="a" style="left:208px;top:94px;width:12px;height:12px;background:#fff"></div>
<div class="a" style="left:210px;top:96px;width:8px;height:8px;background:#397d49"></div>
</div>
<div class="a" style="left:2096px;top:324px;width:2px;height:1199px;background:#dcdcdc"></div>
<div class="a" style="left:2098px;top:324px;width:698px;height:1199px;background:#fff"></div>
<div class="a" style="left:2098px;top:324px;width:698px;height:112px;background:#f5f5f5"></div>
<div class="t " style="left:2146.60px;top:365.21px;font-size:30.00px;line-height:30.00px;color:#242424;transform:scaleX(1.0600);transform-origin:0 50%;-webkit-text-stroke:0.7px #242424;">Trading Economics</div>
<svg class="a" style="left:0;top:0" width="1" height="1" fill="#242424"><circle cx="2658" cy="379" r="2.900"/><circle cx="2672.300" cy="379" r="2.900"/><circle cx="2686.600" cy="379" r="2.900"/></svg>
<svg class="a" style="left:0;top:0" width="1" height="1" fill="none" stroke="#242424" stroke-width="2.200" stroke-linecap="round"><path d="M2727.700 369l22.700 23M2750.400 369l-22.700 23"/></svg>
<div class="a" style="left:2798px;top:324px;width:2px;height:1199px;background:#d4d4d4"></div>
<div class="a" style="left:2800px;top:416px;width:6px;height:63.5px;border-radius:3px;background:#3a7d4a"></div>
<div class="a" style="left:2820px;top:346px;width:40px;height:40px;box-sizing:border-box;border:1px solid #c8c8c8;background:#fff"></div>
<div class="a" style="left:2821px;top:365px;width:38px;height:1px;background:#e0e0e0"></div>
<div class="t " style="left:2823.60px;top:350.53px;font-size:12.60px;line-height:12.60px;color:#2b2b3b;transform:scaleX(0.9155);transform-origin:0 50%;-webkit-text-stroke:0.3px #2b2b3b;">MSFT</div>
<div class="t " style="left:2827.10px;top:369.62px;font-size:13.80px;line-height:13.80px;color:#5bb05a;font-weight:bold;transform:scaleX(0.9160);transform-origin:0 50%;">$ 47</div>
<div class="a" style="left:2820px;top:426.3px;width:40px;height:39.5px;background:#333"></div>
<div class="t " style="left:2825.00px;top:434.08px;font-size:24.60px;line-height:24.60px;color:#e4e4e4;font-weight:bold;transform:scaleX(1.0046);transform-origin:0 50%;">T</div>
<div class="t " style="left:2840.80px;top:434.08px;font-size:24.60px;line-height:24.60px;color:#8c8c8c;font-weight:bold;transform:scaleX(0.8715);transform-origin:0 50%;">E</div>
<svg class="a" style="left:2364.0px;top:458.0px" width="48.0" height="48.0" viewBox="0 0 512 512"><path d="M336 352c97.200 0 176-78.800 176-176S433.200 0 336 0S160 78.800 160 176c0 18.700 2.900 36.800 8.300 53.700L7 391c-4.500 4.500-7 10.600-7 17v80c0 13.300 10.700 24 24 24h80c13.300 0 24-10.700 24-24V448h40c13.300 0 24-10.700 24-24V384h40c6.400 0 12.500-2.500 17-7l33.300-33.300c16.900 5.400 35 8.300 53.700 8.300zM376 96a40 40 0 1 1 0 80 40 40 0 1 1 0-80z" fill="#37822a"/></svg>
<svg class="a" style="left:2460.0px;top:458.0px" width="48.0" height="48.0" viewBox="0 0 512 512"><path d="M75 75L41 41C25.900 25.900 0 36.600 0 57.900V168c0 13.300 10.700 24 24 24h110.100c21.400 0 32.100-25.900 17-41l-30.800-30.800C155 85.500 203 64 256 64c106 0 192 86 192 192s-86 192-192 192c-40.800 0-78.600-12.700-109.700-34.400c-14.500-10.100-34.400-6.600-44.600 7.900s-6.600 34.400 7.900 44.600C151.200 495 201.700 512 256 512c141.400 0 256-114.600 256-256S397.400 0 256 0C185.300 0 121.300 28.700 75 75zm181 53c-13.300 0-24 10.700-24 24V256c0 6.400 2.500 12.500 7 17l72 72c9.400 9.400 24.600 9.400 33.900 0s9.400-24.600 0-33.900l-65-65V152c0-13.300-10.700-24-24-24z" fill="#222"/></svg>
<svg class="a" style="left:2556.0px;top:458.0px" width="48.0" height="48.0" viewBox="0 0 512 512"><path d="M256 512A256 256 0 1 0 256 0a256 256 0 1 0 0 512zM216 336h24V272H216c-13.300 0-24-10.700-24-24s10.700-24 24-24h48c13.300 0 24 10.700 24 24v88h8c13.300 0 24 10.700 24 24s-10.700 24-24 24H216c-13.300 0-24-10.700-24-24s10.700-24 24-24zm40-208a32 32 0 1 1 0 64 32 32 0 1 1 0-64z" fill="#222"/></svg>
<svg class="a" style="left:2652.0px;top:458.0px" width="48.0" height="48.0" viewBox="0 0 512 512"><path d="M48 64C21.500 64 0 85.500 0 112c0 15.100 7.100 29.300 19.200 38.400L236.800 313.600c11.400 8.500 27 8.500 38.400 0L492.800 150.400c12.100-9.100 19.200-23.300 19.200-38.400c0-26.500-21.500-48-48-48H48zM0 176V384c0 35.300 28.700 64 64 64H448c35.300 0 64-28.700 64-64V176L294.400 339.200c-22.800 17.100-54 17.100-76.800 0L0 176z" fill="#222"/></svg>
<div class="a" style="left:2162.3px;top:577.0px;width:569.5px;height:76.0px;box-sizing:border-box;border:2px solid #cacaca;border-radius:8px;background:#fff"></div><div class="t " style="left:2184.60px;top:601.20px;font-size:28.00px;line-height:28.00px;color:#262626;transform:scaleX(1.0128);transform-origin:0 50%;-webkit-text-stroke:0.35px #262626;">Forecasts</div><svg class="a" style="left:0;top:0" width="1" height="1" fill="none" stroke="#cccccc" stroke-width="4"><path d="M2612.500 606.4l16 17.200M2628.500 606.4l-16 17.200"/></svg>
<div class="a" style="left:2656px;top:595px;width:2px;height:40px;background:#cccccc"></div>
<svg class="a" style="left:0;top:0" width="1" height="1" fill="none" stroke="#cccccc" stroke-width="4.200"><path d="M2684.500 611.5l9.700 9.700 9.700-9.700"/></svg>
<div class="a" style="left:2162.3px;top:685.0px;width:569.5px;height:76.0px;box-sizing:border-box;border:2px solid #cacaca;border-radius:8px;background:#fff"></div><div class="t " style="left:2184.60px;top:709.20px;font-size:28.00px;line-height:28.00px;color:#262626;transform:scaleX(1.0015);transform-origin:0 50%;-webkit-text-stroke:0.35px #262626;">Index</div><svg class="a" style="left:0;top:0" width="1" height="1" fill="none" stroke="#cccccc" stroke-width="4"><path d="M2612.500 714.4l16 17.200M2628.500 714.4l-16 17.200"/></svg>
<div class="a" style="left:2656px;top:703px;width:2px;height:40px;background:#cccccc"></div>
<svg class="a" style="left:0;top:0" width="1" height="1" fill="none" stroke="#cccccc" stroke-width="4.200"><path d="M2684.500 719.5l9.700 9.700 9.700-9.700"/></svg>
<div class="t " style="left:2163.00px;top:799.22px;font-size:28.80px;line-height:28.80px;color:#212121;transform:scaleX(1.0059);transform-origin:0 50%;-webkit-text-stroke:0.35px #212121;">Select columns to use</div>
<div class="a" style="left:2162.3px;top:865.0px;width:569.5px;height:611.0px;box-sizing:border-box;border:2px solid #b3b3b3;border-radius:8px;background:#fff"></div><svg class="a" style="left:0;top:0" width="1" height="1" fill="none" stroke="#cccccc" stroke-width="4"><path d="M2612.500 1161.9l16 17.200M2628.500 1161.9l-16 17.200"/></svg>
<div class="a" style="left:2656px;top:883px;width:2px;height:575.4px;background:#cccccc"></div>
<svg class="a" style="left:0;top:0" width="1" height="1" fill="none" stroke="#cccccc" stroke-width="4.200"><path d="M2684.500 1167.0l9.700 9.700 9.700-9.700"/></svg>
<div class="a" style="left:2184.0px;top:875.0px;width:151.6px;height:52px;border-radius:4px;background:#e6e6e6"></div>
<div class="t " style="left:2195.90px;top:889.78px;font-size:24.00px;line-height:24.00px;color:#333;transform:scaleX(1.0567);transform-origin:0 50%;-webkit-text-stroke:0.4px #333;">Country</div>
<svg class="a" style="left:0;top:0" width="1" height="1" fill="none" stroke="#2b2b2b" stroke-width="3.600"><path d="M2308.3 894.8l11.400 12M2319.7 894.8l-11.400 12"/></svg>
<div class="a" style="left:2344.0px;top:875.0px;width:164.8px;height:52px;border-radius:4px;background:#e6e6e6"></div>
<div class="t " style="left:2355.90px;top:889.78px;font-size:24.00px;line-height:24.00px;color:#333;transform:scaleX(1.0474);transform-origin:0 50%;-webkit-text-stroke:0.4px #333;">Category</div>
<svg class="a" style="left:0;top:0" width="1" height="1" fill="none" stroke="#2b2b2b" stroke-width="3.600"><path d="M2481.5 894.8l11.400 12M2492.9 894.8l-11.400 12"/></svg>
<div class="a" style="left:2184.0px;top:935.0px;width:111.0px;height:52px;border-radius:4px;background:#e6e6e6"></div>
<div class="t " style="left:2195.90px;top:949.78px;font-size:24.00px;line-height:24.00px;color:#333;transform:scaleX(1.0844);transform-origin:0 50%;-webkit-text-stroke:0.4px #333;">Title</div>
<svg class="a" style="left:0;top:0" width="1" height="1" fill="none" stroke="#2b2b2b" stroke-width="3.600"><path d="M2267.7 954.8l11.400 12M2279.1 954.8l-11.400 12"/></svg>
<div class="a" style="left:2303.0px;top:935.0px;width:193.0px;height:52px;border-radius:4px;background:#e6e6e6"></div>
<div class="t " style="left:2314.90px;top:949.78px;font-size:24.00px;line-height:24.00px;color:#333;transform:scaleX(1.0418);transform-origin:0 50%;-webkit-text-stroke:0.4px #333;">LatestValue</div>
<svg class="a" style="left:0;top:0" width="1" height="1" fill="none" stroke="#2b2b2b" stroke-width="3.600"><path d="M2468.7 954.8l11.400 12M2480.1 954.8l-11.400 12"/></svg>
<div class="a" style="left:2184.0px;top:995.0px;width:246.0px;height:52px;border-radius:4px;background:#e6e6e6"></div>
<div class="t " style="left:2195.90px;top:1009.78px;font-size:24.00px;line-height:24.00px;color:#333;transform:scaleX(1.0428);transform-origin:0 50%;-webkit-text-stroke:0.4px #333;">LatestValueDate</div>
<svg class="a" style="left:0;top:0" width="1" height="1" fill="none" stroke="#2b2b2b" stroke-width="3.600"><path d="M2402.7 1014.8l11.400 12M2414.1 1014.8l-11.400 12"/></svg>
<div class="a" style="left:2437.8px;top:995.0px;width:87.2px;height:52px;border-radius:4px;background:#e6e6e6"></div>
<div class="t " style="left:2449.70px;top:1009.78px;font-size:24.00px;line-height:24.00px;color:#333;transform:scaleX(0.9140);transform-origin:0 50%;-webkit-text-stroke:0.4px #333;">q1</div>
<svg class="a" style="left:0;top:0" width="1" height="1" fill="none" stroke="#2b2b2b" stroke-width="3.600"><path d="M2497.7 1014.8l11.400 12M2509.1 1014.8l-11.400 12"/></svg>
<div class="a" style="left:2184.0px;top:1055.0px;width:90.9px;height:52px;border-radius:4px;background:#e6e6e6"></div>
<div class="t " style="left:2195.90px;top:1069.78px;font-size:24.00px;line-height:24.00px;color:#333;transform:scaleX(1.0526);transform-origin:0 50%;-webkit-text-stroke:0.4px #333;">q2</div>
<svg class="a" style="left:0;top:0" width="1" height="1" fill="none" stroke="#2b2b2b" stroke-width="3.600"><path d="M2247.6 1074.8l11.400 12M2259.0 1074.8l-11.400 12"/></svg>
<div class="a" style="left:2283.0px;top:1055.0px;width:91.0px;height:52px;border-radius:4px;background:#e6e6e6"></div>
<div class="t " style="left:2294.90px;top:1069.78px;font-size:24.00px;line-height:24.00px;color:#333;transform:scaleX(1.0564);transform-origin:0 50%;-webkit-text-stroke:0.4px #333;">q3</div>
<svg class="a" style="left:0;top:0" width="1" height="1" fill="none" stroke="#2b2b2b" stroke-width="3.600"><path d="M2346.7 1074.8l11.400 12M2358.1 1074.8l-11.400 12"/></svg>
<div class="a" style="left:2381.9px;top:1055.0px;width:91.9px;height:52px;border-radius:4px;background:#e6e6e6"></div>
<div class="t " style="left:2393.80px;top:1069.78px;font-size:24.00px;line-height:24.00px;color:#333;transform:scaleX(1.0901);transform-origin:0 50%;-webkit-text-stroke:0.4px #333;">q4</div>
<svg class="a" style="left:0;top:0" width="1" height="1" fill="none" stroke="#2b2b2b" stroke-width="3.600"><path d="M2446.5 1074.8l11.400 12M2457.9 1074.8l-11.400 12"/></svg>
<div class="a" style="left:2184.0px;top:1115.0px;width:154.0px;height:52px;border-radius:4px;background:#e6e6e6"></div>
<div class="t " style="left:2195.90px;top:1129.78px;font-size:24.00px;line-height:24.00px;color:#333;transform:scaleX(1.0000);transform-origin:0 50%;-webkit-text-stroke:0.4px #333;">YearEnd</div>
<svg class="a" style="left:0;top:0" width="1" height="1" fill="none" stroke="#2b2b2b" stroke-width="3.600"><path d="M2310.7 1134.8l11.400 12M2322.1 1134.8l-11.400 12"/></svg>
<div class="a" style="left:2345.9px;top:1115.0px;width:169.1px;height:52px;border-radius:4px;background:#e6e6e6"></div>
<div class="t " style="left:2357.80px;top:1129.78px;font-size:24.00px;line-height:24.00px;color:#333;transform:scaleX(1.0168);transform-origin:0 50%;-webkit-text-stroke:0.4px #333;">YearEnd2</div>
<svg class="a" style="left:0;top:0" width="1" height="1" fill="none" stroke="#2b2b2b" stroke-width="3.600"><path d="M2487.7 1134.8l11.400 12M2499.1 1134.8l-11.400 12"/></svg>
<div class="a" style="left:2184.0px;top:1175.0px;width:168.7px;height:52px;border-radius:4px;background:#e6e6e6"></div>
<div class="t " style="left:2195.90px;top:1189.78px;font-size:24.00px;line-height:24.00px;color:#333;transform:scaleX(1.0130);transform-origin:0 50%;-webkit-text-stroke:0.4px #333;">YearEnd3</div>
<svg class="a" style="left:0;top:0" width="1" height="1" fill="none" stroke="#2b2b2b" stroke-width="3.600"><path d="M2325.4 1194.8l11.400 12M2336.8 1194.8l-11.400 12"/></svg>
<div class="a" style="left:2361.3px;top:1175.0px;width:150.3px;height:52px;border-radius:4px;background:#e6e6e6"></div>
<div class="t " style="left:2373.20px;top:1189.78px;font-size:24.00px;line-height:24.00px;color:#333;transform:scaleX(1.0086);transform-origin:0 50%;-webkit-text-stroke:0.4px #333;">q1_date</div>
<svg class="a" style="left:0;top:0" width="1" height="1" fill="none" stroke="#2b2b2b" stroke-width="3.600"><path d="M2484.3 1194.8l11.400 12M2495.7 1194.8l-11.400 12"/></svg>
<div class="a" style="left:2184.0px;top:1235.0px;width:153.8px;height:52px;border-radius:4px;background:#e6e6e6"></div>
<div class="t " style="left:2195.90px;top:1249.78px;font-size:24.00px;line-height:24.00px;color:#333;transform:scaleX(1.0489);transform-origin:0 50%;-webkit-text-stroke:0.4px #333;">q2_date</div>
<svg class="a" style="left:0;top:0" width="1" height="1" fill="none" stroke="#2b2b2b" stroke-width="3.600"><path d="M2310.5 1254.8l11.400 12M2321.9 1254.8l-11.400 12"/></svg>
<div class="a" style="left:2346.0px;top:1235.0px;width:154.0px;height:52px;border-radius:4px;background:#e6e6e6"></div>
<div class="t " style="left:2357.90px;top:1249.78px;font-size:24.00px;line-height:24.00px;color:#333;transform:scaleX(1.0512);transform-origin:0 50%;-webkit-text-stroke:0.4px #333;">q3_date</div>
<svg class="a" style="left:0;top:0" width="1" height="1" fill="none" stroke="#2b2b2b" stroke-width="3.600"><path d="M2472.7 1254.8l11.400 12M2484.1 1254.8l-11.400 12"/></svg>
<div class="a" style="left:2184.0px;top:1295.0px;width:154.7px;height:52px;border-radius:4px;background:#e6e6e6"></div>
<div class="t " style="left:2195.90px;top:1309.78px;font-size:24.00px;line-height:24.00px;color:#333;transform:scaleX(1.0593);transform-origin:0 50%;-webkit-text-stroke:0.4px #333;">q4_date</div>
<svg class="a" style="left:0;top:0" width="1" height="1" fill="none" stroke="#2b2b2b" stroke-width="3.600"><path d="M2311.4 1314.8l11.400 12M2322.8 1314.8l-11.400 12"/></svg>
<div class="a" style="left:2347.0px;top:1295.0px;width:179.6px;height:52px;border-radius:4px;background:#e6e6e6"></div>
<div class="t " style="left:2358.90px;top:1309.78px;font-size:24.00px;line-height:24.00px;color:#333;transform:scaleX(1.0301);transform-origin:0 50%;-webkit-text-stroke:0.4px #333;">Frequency</div>
<svg class="a" style="left:0;top:0" width="1" height="1" fill="none" stroke="#2b2b2b" stroke-width="3.600"><path d="M2499.3 1314.8l11.400 12M2510.7 1314.8l-11.400 12"/></svg>
<div class="a" style="left:2184.0px;top:1355.0px;width:107.8px;height:52px;border-radius:4px;background:#e6e6e6"></div>
<div class="t " style="left:2195.90px;top:1369.78px;font-size:24.00px;line-height:24.00px;color:#333;transform:scaleX(1.0544);transform-origin:0 50%;-webkit-text-stroke:0.4px #333;">Unit</div>
<svg class="a" style="left:0;top:0" width="1" height="1" fill="none" stroke="#2b2b2b" stroke-width="3.600"><path d="M2264.5 1374.8l11.400 12M2275.9 1374.8l-11.400 12"/></svg>
<div class="a" style="left:2184.0px;top:1415.0px;width:303.8px;height:52px;border-radius:4px;background:#e6e6e6"></div>
<div class="t " style="left:2195.90px;top:1429.78px;font-size:24.00px;line-height:24.00px;color:#333;transform:scaleX(1.0505);transform-origin:0 50%;-webkit-text-stroke:0.4px #333;">HistoricalDataSymbol</div>
<svg class="a" style="left:0;top:0" width="1" height="1" fill="none" stroke="#2b2b2b" stroke-width="3.600"><path d="M2460.5 1434.8l11.400 12M2471.9 1434.8l-11.400 12"/></svg>
<div class="a" style="left:2098px;top:1490px;width:700px;height:33px;overflow:hidden"><div class="a" style="left:56px;top:10.600px;width:586px;height:80px;border-radius:20px;background:#a4bffb"></div><div class="a" style="left:63.4px;top:19px;width:570.6px;height:64px;border-radius:12px;background:#2a5bd0"></div></div>
<div class="a" style="left:0;top:1458px;width:2096px;height:65px;background:#f5f5f5"></div>
<svg class="a" style="left:0;top:0" width="1" height="1" fill="none" stroke="#c8c8c8" stroke-width="2.200" stroke-linecap="round" stroke-linejoin="round"><path d="M36.400 1480.200l-10 9 10 9M91.800 1480.200l10 9-10 9"/></svg>
<svg class="a" style="left:0;top:0" width="1" height="1" fill="none" stroke="#424242" stroke-width="2" stroke-linecap="round"><path d="M149 1481.300h22.200M149 1489.400h22.200M149 1497.600h22.200"/></svg>
<div class="t " style="left:212.20px;top:1476.34px;font-size:27.00px;line-height:27.00px;color:#484848;transform:scaleX(0.9757);transform-origin:0 50%;">Sheet2</div>
<div class="t " style="left:333.50px;top:1476.34px;font-size:27.00px;line-height:27.00px;color:#424242;transform:scaleX(0.9641);transform-origin:0 50%;-webkit-text-stroke:0.9px #424242;">Sheet1</div>
<div class="a" style="left:333px;top:1516px;width:83px;height:6px;background:#397d49"></div>
<svg class="a" style="left:0;top:0" width="1" height="1" fill="none" stroke="#424242" stroke-width="2" stroke-linecap="round"><path d="M454.500 1489h21.500M465.200 1478.200v21.500"/></svg>
<div class="a" style="left:0;top:1523px;width:2880px;height:41px;background:#fff"></div>
<div class="a" style="left:0;top:1522px;width:2880px;height:2px;background:#e0e0e0"></div>
<div class="t " style="left:40.60px;top:1539.31px;font-size:23.50px;line-height:23.50px;color:#616161;transform:scaleX(1.0101);transform-origin:0 50%;">Workbook Statistics</div>
<svg class="a" style="left:0;top:0" width="1" height="1"><path d="M2326.0 1546.2L2334.3 1554.6L2342.6 1546.2" fill="none" stroke="#242424" stroke-width="3.0" stroke-linecap="round" stroke-linejoin="round"/></svg>
<svg class="a" style="left:0;top:0" width="1" height="1"><rect x="2375.400" y="1539.300" width="26" height="17" rx="3.200" fill="none" stroke="#242424" stroke-width="2"/><g fill="#242424"><circle cx="2380.800" cy="1544.600" r="1.300"/><circle cx="2385.600" cy="1544.600" r="1.300"/><circle cx="2390.400" cy="1544.600" r="1.300"/><circle cx="2395.200" cy="1544.600" r="1.300"/><circle cx="2383.200" cy="1548.400" r="1.300"/><circle cx="2388.400" cy="1548.400" r="1.300"/><circle cx="2393.600" cy="1548.400" r="1.300"/><rect x="2380.500" y="1551.200" width="15.800" height="2.200" rx="1.100"/></g></svg>
<svg class="a" style="left:2440.0px;top:1534.5px" width="24.0" height="24.0" viewBox="0 0 24 24"><circle cx="12" cy="12" r="10.800" fill="none" stroke="#242424" stroke-width="2"/><path d="M8.500 9.500a3.600 3.600 0 1 1 5.500 3c-1.300.900-2 1.600-2 3.200" fill="none" stroke="#242424" stroke-width="2" stroke-linecap="round"/><circle cx="12" cy="18.600" r="1.400" fill="#242424"/></svg>
<svg class="a" style="left:2501.5px;top:1532.0px" width="30.0" height="28.0" viewBox="0 0 30 28"><circle cx="8.500" cy="12" r="3.800" fill="none" stroke="#242424" stroke-width="2"/><path d="M1.500 21.500c0-1.500 1.200-2.500 2.500-2.500h9c1.400 0 2.500 1 2.500 2.500 0 3-3 4.700-7 4.700s-7-1.700-7-4.700z" fill="none" stroke="#242424" stroke-width="2"/><path d="M15.500 2h11a2 2 0 0 1 2 2v5a2 2 0 0 1-2 2h-5l-3.500 3v-3h-2.500a2 2 0 0 1-2-2V4a2 2 0 0 1 2-2z" fill="#fff" stroke="#242424" stroke-width="2" stroke-linejoin="round"/></svg>
<svg class="a" style="left:0;top:0" width="1" height="1" fill="none" stroke="#242424" stroke-width="2" stroke-linecap="round"><path d="M2569 1547.700h20M2749.200 1547.700h20M2759.200 1537.700v20"/></svg>
<div class="a" style="left:2613px;top:1529px;width:114px;height:34px;box-sizing:border-box;border:2px solid #d1d1d1;border-radius:8px;background:#fff"></div>
<div class="t " style="left:2623.80px;top:1536.71px;font-size:23.50px;line-height:23.50px;color:#242424;transform:scaleX(0.9216);transform-origin:0 50%;">100%</div>
<svg class="a" style="left:0;top:0" width="1" height="1"><path d="M2694.0 1541.6L2702.8 1550.4L2711.6 1541.6" fill="none" stroke="#242424" stroke-width="2.0" stroke-linecap="round" stroke-linejoin="round"/></svg>
<svg class="a" style="left:0;top:0" width="1" height="1" fill="none" stroke="#242424" stroke-width="2.200" stroke-linecap="round" stroke-linejoin="round"><path d="M2813 1542.500v-4.500a3 3 0 0 1 3-3h4.500M2828.500 1535h4.500a3 3 0 0 1 3 3v4.500M2836 1550.500v4.500a3 3 0 0 1-3 3h-4.500M2820.500 1558h-4.500a3 3 0 0 1-3-3v-4.500"/></svg>
</div>
<script>(function(){var w=window.innerWidth||2880;if(w&&Math.abs(w-2880)>1){document.documentElement.style.zoom=(w/2880);}})();</script>
</body></html>
